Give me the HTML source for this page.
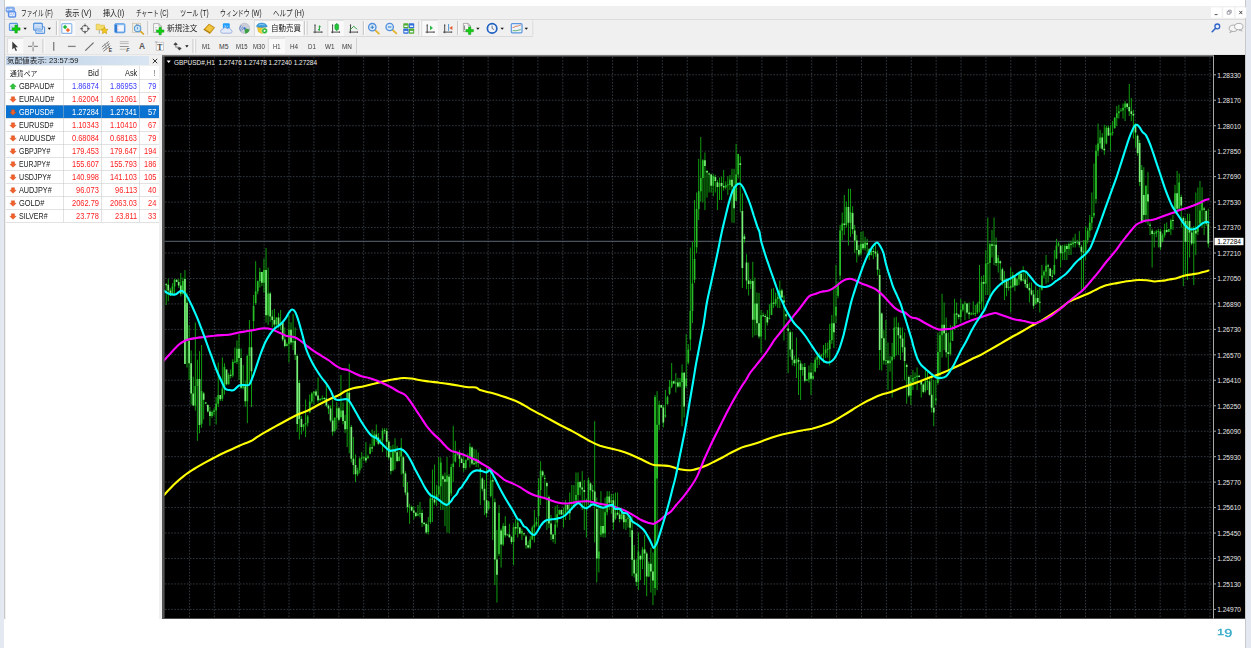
<!DOCTYPE html>
<html><head><meta charset="utf-8"><title>MT4</title>
<style>
html,body{margin:0;padding:0;background:#fff;}
body{width:1251px;height:648px;position:relative;overflow:hidden;font-family:"Liberation Sans","Noto Sans CJK JP",sans-serif;}
.tx{position:absolute;white-space:nowrap;line-height:1;transform-origin:0 0;font-family:"Liberation Sans","Noto Sans CJK JP",sans-serif;}
.abs{position:absolute}
</style></head><body>
<div class="abs" style="left:0;top:0;width:4px;height:648px;background:#e4e8f1"></div>
<div class="abs" style="left:4px;top:0;width:1px;height:619px;background:#c9c9c9"></div>
<div class="abs" style="left:1245px;top:0;width:6px;height:648px;background:#e4e8f1"></div><div class="abs" style="left:1245px;top:0;width:1px;height:648px;background:#c9c9c9"></div>
<div class="abs" style="left:5px;top:6px;width:1240px;height:49px;background:#f0f0f0"></div>
<div class="abs" style="left:5px;top:18.5px;width:1240px;height:1px;background:#dcdcdc"></div>
<div class="abs" style="left:5px;top:36px;width:528px;height:1px;background:#dadada"></div>
<div class="abs" style="left:5px;top:54px;width:1240px;height:1px;background:#e4e4e4"></div>
<div style="position:absolute;left:5px;top:55px;width:157px;height:564px;background:#f0f0f0"></div>
<div style="position:absolute;left:6px;top:66px;width:153px;height:553px;background:#fff"></div>
<div style="position:absolute;left:6px;top:56px;width:143px;height:9px;background:linear-gradient(90deg,#bfd2e6,#d9e5f2)"></div>
<svg style="position:absolute;left:152px;top:57.5px" width="6" height="6" viewBox="0 0 6 6"><path d="M0.8 0.8L5.2 5.2M5.2 0.8L0.8 5.2" stroke="#222" stroke-width="0.9"/></svg>
<div style="position:absolute;left:6px;top:104.9px;width:153px;height:13.2px;background:#0a72d1"></div>
<div style="position:absolute;left:6px;top:78.5px;width:153px;height:1px;background:rgba(190,190,190,0.45)"></div>
<div style="position:absolute;left:6px;top:91.5px;width:153px;height:1px;background:rgba(190,190,190,0.45)"></div>
<div style="position:absolute;left:6px;top:104.6px;width:153px;height:1px;background:rgba(190,190,190,0.45)"></div>
<div style="position:absolute;left:6px;top:117.6px;width:153px;height:1px;background:rgba(190,190,190,0.45)"></div>
<div style="position:absolute;left:6px;top:130.6px;width:153px;height:1px;background:rgba(190,190,190,0.45)"></div>
<div style="position:absolute;left:6px;top:143.6px;width:153px;height:1px;background:rgba(190,190,190,0.45)"></div>
<div style="position:absolute;left:6px;top:156.7px;width:153px;height:1px;background:rgba(190,190,190,0.45)"></div>
<div style="position:absolute;left:6px;top:169.7px;width:153px;height:1px;background:rgba(190,190,190,0.45)"></div>
<div style="position:absolute;left:6px;top:182.7px;width:153px;height:1px;background:rgba(190,190,190,0.45)"></div>
<div style="position:absolute;left:6px;top:195.8px;width:153px;height:1px;background:rgba(190,190,190,0.45)"></div>
<div style="position:absolute;left:6px;top:208.8px;width:153px;height:1px;background:rgba(190,190,190,0.45)"></div>
<div style="position:absolute;left:6px;top:221.8px;width:153px;height:1px;background:rgba(190,190,190,0.45)"></div>
<div style="position:absolute;left:63.3px;top:66px;width:1px;height:156.3px;background:rgba(190,190,190,0.45)"></div>
<div style="position:absolute;left:101.0px;top:66px;width:1px;height:156.3px;background:rgba(190,190,190,0.45)"></div>
<div style="position:absolute;left:138.8px;top:66px;width:1px;height:156.3px;background:rgba(190,190,190,0.45)"></div>
<svg style="position:absolute;left:8.8px;top:82.5px" width="8" height="7" viewBox="0 0 8 7"><path d="M4 0.600L7.200 3.500H5.600V6H2.400V3.500H0.800z" fill="#2fc43a" stroke="#1a9a24" stroke-width="0.4"/></svg>
<svg style="position:absolute;left:8.8px;top:95.5px" width="8" height="7" viewBox="0 0 8 7"><path d="M4 6.200L7.200 3.300H5.600V0.800H2.400V3.300H0.800z" fill="#f2602a" stroke="#cf4414" stroke-width="0.4"/></svg>
<svg style="position:absolute;left:8.8px;top:108.6px" width="8" height="7" viewBox="0 0 8 7"><path d="M4 6.200L7.200 3.300H5.600V0.800H2.400V3.300H0.800z" fill="#f2602a" stroke="#cf4414" stroke-width="0.4"/></svg>
<svg style="position:absolute;left:8.8px;top:121.6px" width="8" height="7" viewBox="0 0 8 7"><path d="M4 6.200L7.200 3.300H5.600V0.800H2.400V3.300H0.800z" fill="#f2602a" stroke="#cf4414" stroke-width="0.4"/></svg>
<svg style="position:absolute;left:8.8px;top:134.6px" width="8" height="7" viewBox="0 0 8 7"><path d="M4 6.200L7.200 3.300H5.600V0.800H2.400V3.300H0.800z" fill="#f2602a" stroke="#cf4414" stroke-width="0.4"/></svg>
<svg style="position:absolute;left:8.8px;top:147.6px" width="8" height="7" viewBox="0 0 8 7"><path d="M4 6.200L7.200 3.300H5.600V0.800H2.400V3.300H0.800z" fill="#f2602a" stroke="#cf4414" stroke-width="0.4"/></svg>
<svg style="position:absolute;left:8.8px;top:160.7px" width="8" height="7" viewBox="0 0 8 7"><path d="M4 6.200L7.200 3.300H5.600V0.800H2.400V3.300H0.800z" fill="#f2602a" stroke="#cf4414" stroke-width="0.4"/></svg>
<svg style="position:absolute;left:8.8px;top:173.7px" width="8" height="7" viewBox="0 0 8 7"><path d="M4 6.200L7.200 3.300H5.600V0.800H2.400V3.300H0.800z" fill="#f2602a" stroke="#cf4414" stroke-width="0.4"/></svg>
<svg style="position:absolute;left:8.8px;top:186.7px" width="8" height="7" viewBox="0 0 8 7"><path d="M4 6.200L7.200 3.300H5.600V0.800H2.400V3.300H0.800z" fill="#f2602a" stroke="#cf4414" stroke-width="0.4"/></svg>
<svg style="position:absolute;left:8.8px;top:199.8px" width="8" height="7" viewBox="0 0 8 7"><path d="M4 6.200L7.200 3.300H5.600V0.800H2.400V3.300H0.800z" fill="#f2602a" stroke="#cf4414" stroke-width="0.4"/></svg>
<svg style="position:absolute;left:8.8px;top:212.8px" width="8" height="7" viewBox="0 0 8 7"><path d="M4 6.200L7.200 3.300H5.600V0.800H2.400V3.300H0.800z" fill="#f2602a" stroke="#cf4414" stroke-width="0.4"/></svg>
<svg width="1251" height="648" viewBox="0 0 1251 648" style="position:absolute;left:0;top:0">
<rect x="162.0" y="55.0" width="1083.0" height="563.7" fill="#000"/>
<path d="M189.46 57.0V618.7M214.35 57.0V618.7M239.24 57.0V618.7M264.13 57.0V618.7M289.02 57.0V618.7M313.91 57.0V618.7M338.80 57.0V618.7M363.69 57.0V618.7M388.58 57.0V618.7M413.47 57.0V618.7M438.36 57.0V618.7M463.25 57.0V618.7M488.14 57.0V618.7M513.03 57.0V618.7M537.92 57.0V618.7M562.81 57.0V618.7M587.70 57.0V618.7M612.59 57.0V618.7M637.48 57.0V618.7M662.37 57.0V618.7M687.26 57.0V618.7M712.15 57.0V618.7M737.04 57.0V618.7M761.93 57.0V618.7M786.82 57.0V618.7M811.71 57.0V618.7M836.60 57.0V618.7M861.49 57.0V618.7M886.38 57.0V618.7M911.27 57.0V618.7M936.16 57.0V618.7M961.05 57.0V618.7M985.94 57.0V618.7M1010.83 57.0V618.7M1035.72 57.0V618.7M1060.61 57.0V618.7M1085.50 57.0V618.7M1110.39 57.0V618.7M1135.28 57.0V618.7M1160.17 57.0V618.7M1185.06 57.0V618.7M1209.95 57.0V618.7M165.0 74.80H1213.5M165.0 100.26H1213.5M165.0 125.71H1213.5M165.0 151.17H1213.5M165.0 176.63H1213.5M165.0 202.08H1213.5M165.0 227.54H1213.5M165.0 253.00H1213.5M165.0 278.46H1213.5M165.0 303.91H1213.5M165.0 329.37H1213.5M165.0 354.83H1213.5M165.0 380.28H1213.5M165.0 405.74H1213.5M165.0 431.20H1213.5M165.0 456.66H1213.5M165.0 482.11H1213.5M165.0 507.57H1213.5M165.0 533.03H1213.5M165.0 558.48H1213.5M165.0 583.94H1213.5M165.0 609.40H1213.5" stroke="#778899" stroke-opacity="0.42" stroke-width="1" stroke-dasharray="1.56 1.56" fill="none"/>
<path d="M164.5 241.3H1213.5" stroke="#5a6672" stroke-width="1"/>
<defs><filter id="cb" x="160" y="50" width="1090" height="575" filterUnits="userSpaceOnUse" color-interpolation-filters="sRGB"><feGaussianBlur stdDeviation="0.7 0.35"/></filter></defs>
<g filter="url(#cb)"><path d="M166.22 283.0V305.0M168.30 278.8V301.2M170.38 287.9V295.9M172.46 283.2V295.2M174.54 278.8V293.8M176.62 279.3V282.1M178.70 279.1V288.0M180.78 273.0V296.4M182.86 277.6V294.7M184.94 270.0V364.0M187.02 292.5V367.5M189.10 325.0V380.0M191.18 350.4V404.5M193.26 376.7V406.1M195.34 322.5V410.6M197.42 359.7V440.8M199.50 351.2V433.2M201.58 345.0V427.7M203.66 392.1V419.5M205.74 401.9V404.1M207.82 404.1V412.5M209.90 407.0V425.8M211.98 410.5V417.9M214.06 408.2V415.6M216.14 397.0V424.5M218.22 362.5V407.0M220.30 395.0V401.0M222.38 357.5V401.0M224.46 363.2V394.7M226.54 369.5V385.3M228.62 372.9V384.6M230.70 369.5V378.4M232.78 359.3V377.4M234.86 347.5V363.2M236.94 340.4V364.0M239.02 333.8V380.0M241.10 348.5V389.2M243.18 365.0V389.4M245.26 380.6V406.8M247.34 354.9V423.2M249.42 320.0V385.0M251.50 329.4V407.0M253.58 295.0V330.0M255.66 261.2V304.8M257.74 280.5V294.2M259.82 267.9V287.5M261.90 271.8V286.2M263.98 258.6V292.7M266.06 248.0V322.6M268.14 267.5V325.0M270.22 291.9V321.8M272.30 310.0V327.5M274.38 308.8V327.5M276.46 317.3V328.5M278.54 312.9V327.9M280.62 310.0V330.0M282.70 322.6V341.4M284.78 327.5V347.5M286.86 342.3V346.4M288.94 315.0V362.5M291.02 322.4V344.8M293.10 313.8V350.0M295.18 327.5V360.0M297.26 354.2V432.0M299.34 380.1V439.5M301.42 416.0V434.5M303.50 424.2V430.8M305.58 399.5V437.0M307.66 415.0V426.5M309.74 394.5V413.2M311.82 392.2V403.7M313.90 391.4V404.5M315.98 389.3V396.5M318.06 377.5V402.5M320.14 398.0V400.7M322.22 395.4V400.4M324.30 397.1V400.7M326.38 382.5V407.0M328.46 404.3V414.1M330.54 405.3V422.2M332.62 399.5V435.8M334.70 417.3V432.5M336.78 402.0V429.5M338.86 406.7V421.6M340.94 375.0V418.4M343.02 402.3V424.3M345.10 414.9V432.9M347.18 390.1V447.0M349.26 363.8V453.2M351.34 425.0V462.5M353.42 437.0V474.5M355.50 454.5V482.0M357.58 467.7V476.2M359.66 457.3V473.3M361.74 452.0V468.2M363.82 455.7V460.9M365.90 442.0V462.8M367.98 454.6V459.0M370.06 443.8V454.3M372.14 429.5V452.0M374.22 431.0V446.4M376.30 424.5V442.0M378.38 433.0V445.1M380.46 438.7V444.4M382.54 428.2V452.0M384.62 428.2V433.8M386.70 428.2V457.0M388.78 440.1V459.7M390.86 445.8V474.5M392.94 444.7V471.2M395.02 438.2V469.5M397.10 445.9V462.2M399.18 450.7V461.2M401.26 438.2V474.5M403.34 455.8V487.0M405.42 471.2V495.1M407.50 482.0V512.5M409.58 503.6V523.8M411.66 505.5V511.3M413.74 506.2V519.5M415.82 512.2V517.3M417.90 505.0V516.2M419.98 502.0V517.5M422.06 509.5V527.0M424.14 522.1V525.7M426.22 522.5V533.8M428.30 517.0V534.5M430.38 493.3V523.9M432.46 469.5V522.0M434.54 464.5V504.8M436.62 485.1V506.2M438.70 457.0V497.0M440.78 457.5V510.0M442.86 474.5V510.0M444.94 472.5V526.2M447.02 457.0V532.5M449.10 474.2V533.2M451.18 463.9V496.0M453.26 425.8V482.0M455.34 440.8V462.5M457.42 451.9V455.7M459.50 450.0V467.0M461.58 457.3V463.1M463.66 452.5V472.0M465.74 459.3V469.9M467.82 453.3V460.6M469.90 443.2V467.5M471.98 446.5V465.2M474.06 448.8V465.0M476.14 449.5V467.0M478.22 452.5V467.5M480.30 467.6V505.0M482.38 477.2V491.3M484.46 480.0V515.0M486.54 467.5V517.5M488.62 501.0V510.4M490.70 470.0V497.5M492.78 476.1V540.0M494.86 498.5V585.0M496.94 530.0V602.5M499.02 505.0V556.3M501.10 528.5V567.5M503.18 523.2V545.9M505.26 516.2V537.5M507.34 533.8V535.9M509.42 523.8V537.7M511.50 536.1V544.2M513.58 523.2V565.0M515.66 518.8V534.6M517.74 520.0V537.5M519.82 527.0V534.2M521.90 528.8V540.0M523.98 532.8V536.1M526.06 535.0V548.8M528.14 541.2V548.5M530.22 536.2V548.8M532.30 525.8V539.7M534.38 510.0V542.5M536.46 517.3V526.5M538.54 478.3V527.5M540.62 461.2V505.0M542.70 470.2V477.3M544.78 475.0V497.5M546.86 481.7V530.0M548.94 495.5V528.0M551.02 515.0V540.0M553.10 534.2V542.3M555.18 506.2V543.8M557.26 505.0V527.5M559.34 509.5V515.1M561.42 509.3V515.1M563.50 507.5V527.5M565.58 500.0V520.0M567.66 503.1V512.7M569.74 492.5V520.0M571.82 485.0V510.0M573.90 485.0V507.5M575.98 472.5V501.8M578.06 472.5V502.5M580.14 481.1V495.4M582.22 471.2V510.0M584.30 480.0V530.0M586.38 498.6V537.5M588.46 477.5V505.0M590.54 482.3V507.5M592.62 485.0V500.0M594.70 421.2V542.5M596.78 497.5V582.5M598.86 502.5V572.5M600.94 491.2V537.0M603.02 506.2V537.5M605.10 497.5V537.5M607.18 491.2V515.3M609.26 491.2V510.0M611.34 493.8V513.8M613.42 493.8V530.0M615.50 492.5V519.9M617.58 492.5V515.6M619.66 507.5V522.5M621.74 511.3V520.3M623.82 513.8V528.8M625.90 515.0V530.0M627.98 512.5V527.5M630.06 516.7V537.0M632.14 516.2V576.2M634.22 545.0V577.5M636.30 559.3V586.0M638.38 532.5V590.0M640.46 554.6V580.0M642.54 547.1V569.0M644.62 535.0V585.0M646.70 551.8V596.2M648.78 561.5V577.1M650.86 547.5V592.5M652.94 552.5V605.0M655.02 395.0V595.4M657.10 391.2V590.0M659.18 400.6V430.0M661.26 404.8V408.0M663.34 405.0V427.5M665.42 390.0V417.8M667.50 395.6V404.7M669.58 380.0V395.0M671.66 363.0V388.2M673.74 380.7V384.3M675.82 373.0V392.5M677.90 377.9V387.7M679.98 378.0V387.5M682.06 364.4V426.2M684.14 372.1V417.5M686.22 334.2V388.0M688.30 344.1V364.5M690.38 247.5V350.5M692.46 241.8V323.0M694.54 200.0V283.0M696.62 192.5V253.0M698.70 158.8V220.0M700.78 137.0V201.7M702.86 159.2V202.5M704.94 152.5V210.0M707.02 169.9V197.5M709.10 172.5V192.5M711.18 173.7V192.5M713.26 173.8V196.2M715.34 175.0V192.5M717.42 180.0V210.0M719.50 177.5V200.0M721.58 176.6V200.0M723.66 170.0V190.6M725.74 181.4V189.4M727.82 176.2V195.0M729.90 175.0V190.0M731.98 168.8V222.5M734.06 168.8V223.0M736.14 143.8V200.9M738.22 153.9V178.4M740.30 156.2V212.5M742.38 193.4V288.0M744.46 234.1V242.6M746.54 254.2V289.2M748.62 262.5V295.5M750.70 279.2V288.9M752.78 261.8V337.5M754.86 277.5V335.5M756.94 292.5V335.2M759.02 293.0V338.6M761.10 310.0V353.0M763.18 312.6V316.6M765.26 314.2V340.0M767.34 310.0V325.5M769.42 304.2V319.5M771.50 288.8V315.2M773.58 288.0V308.0M775.66 292.5V306.2M777.74 291.8V308.0M779.82 280.5V308.0M781.90 288.8V298.1M783.98 295.5V340.5M786.06 313.4V319.5M788.14 323.0V373.0M790.22 330.4V356.9M792.30 331.8V365.5M794.38 355.7V366.3M796.46 337.5V378.0M798.54 357.5V395.0M800.62 360.5V400.0M802.70 363.9V375.7M804.78 363.0V382.5M806.86 378.9V380.9M808.94 365.5V382.5M811.02 362.5V395.0M813.10 363.0V379.9M815.18 357.5V372.3M817.26 353.0V368.0M819.34 352.5V365.0M821.42 354.3V356.6M823.50 345.0V363.0M825.58 343.0V358.0M827.66 342.5V357.5M829.74 323.8V365.5M831.82 315.0V343.9M833.90 287.5V348.0M835.98 265.0V323.0M838.06 281.4V298.2M840.14 225.0V280.5M842.22 212.5V240.5M844.30 195.0V235.0M846.38 201.5V227.7M848.46 188.8V245.5M850.54 188.8V236.8M852.62 206.2V234.0M854.70 225.0V253.0M856.78 235.0V262.5M858.86 244.9V256.5M860.94 231.8V255.5M863.02 231.2V250.0M865.10 236.8V250.5M867.18 238.8V257.5M869.26 248.0V260.0M871.34 249.5V255.6M873.42 248.0V259.2M875.50 243.0V256.8M877.58 250.5V275.5M879.66 268.9V370.0M881.74 312.6V370.5M883.82 330.1V364.5M885.90 320.0V365.0M887.98 342.5V390.0M890.06 356.0V371.6M892.14 343.0V397.5M894.22 317.5V359.3M896.30 316.8V355.5M898.38 322.5V355.0M900.46 327.5V360.0M902.54 327.5V352.5M904.62 332.5V380.0M906.70 363.4V403.8M908.78 375.6V397.3M910.86 375.0V405.0M912.94 370.0V390.0M915.02 372.5V385.0M917.10 367.5V390.0M919.18 374.8V377.4M921.26 379.6V397.5M923.34 383.3V393.4M925.42 370.0V392.5M927.50 370.0V390.0M929.58 377.5V395.7M931.66 375.0V412.5M933.74 380.0V426.2M935.82 380.0V405.0M937.90 332.5V384.7M939.98 331.3V377.5M942.06 293.8V357.5M944.14 302.5V350.0M946.22 317.5V357.5M948.30 332.5V370.0M950.38 325.0V355.5M952.46 325.8V341.0M954.54 298.8V330.0M956.62 302.5V323.8M958.70 313.8V319.3M960.78 298.8V322.5M962.86 303.5V311.5M964.94 301.2V320.0M967.02 303.0V313.9M969.10 302.5V318.8M971.18 312.1V315.2M973.26 301.2V315.0M975.34 305.0V316.2M977.42 302.4V313.9M979.50 265.0V312.5M981.58 276.2V309.6M983.66 275.0V312.5M985.74 250.0V295.0M987.82 217.5V295.0M989.90 242.8V300.0M991.98 230.0V257.5M994.06 217.5V265.0M996.14 237.5V266.0M998.22 255.0V272.5M1000.30 260.5V280.0M1002.38 267.5V285.4M1004.46 271.2V300.0M1006.54 278.2V296.2M1008.62 280.0V290.7M1010.70 267.5V312.5M1012.78 271.9V287.9M1014.86 276.2V291.2M1016.94 277.7V285.8M1019.02 271.2V285.0M1021.10 273.3V281.9M1023.18 266.2V281.4M1025.26 271.2V287.5M1027.34 275.0V288.8M1029.42 282.5V302.5M1031.50 282.5V295.6M1033.58 290.0V308.8M1035.66 286.2V304.6M1037.74 290.0V303.5M1039.82 287.5V312.5M1041.90 265.0V290.6M1043.98 270.0V278.3M1046.06 255.0V283.8M1048.14 263.8V282.5M1050.22 268.3V276.3M1052.30 270.0V280.0M1054.38 250.0V275.2M1056.46 238.8V259.3M1058.54 241.7V246.6M1060.62 245.0V267.5M1062.70 245.0V260.0M1064.78 244.4V260.0M1066.86 243.8V260.0M1068.94 242.5V255.0M1071.02 240.8V255.0M1073.10 237.5V247.5M1075.18 233.8V247.5M1077.26 239.8V244.4M1079.34 231.2V247.5M1081.42 245.0V290.0M1083.50 240.0V290.0M1085.58 226.2V260.0M1087.66 227.8V243.5M1089.74 215.0V237.5M1091.82 192.5V230.0M1093.90 163.5V218.0M1095.98 144.8V203.5M1098.06 123.5V156.0M1100.14 129.8V148.5M1102.22 133.1V150.0M1104.30 124.8V154.8M1106.38 125.7V144.3M1108.46 125.5V135.9M1110.54 124.8V151.2M1112.62 121.0V135.6M1114.70 117.0V128.8M1116.78 106.0V126.0M1118.86 104.8V118.5M1120.94 108.1V111.4M1123.02 103.5V118.5M1125.10 101.0V121.0M1127.18 103.4V109.3M1129.26 84.0V116.0M1131.34 98.0V121.0M1133.42 109.8V138.5M1135.50 123.1V147.5M1137.58 134.4V155.6M1139.66 139.8V186.0M1141.74 165.0V222.5M1143.82 167.2V220.0M1145.90 185.5V223.0M1147.98 172.2V225.0M1150.06 222.5V235.0M1152.14 228.8V267.5M1154.22 231.2V247.5M1156.30 229.9V237.2M1158.38 228.8V247.5M1160.46 228.8V250.0M1162.54 233.4V242.4M1164.62 223.8V237.5M1166.70 222.5V232.8M1168.78 228.9V232.2M1170.86 218.8V235.0M1172.94 215.0V230.0M1175.02 185.0V214.1M1177.10 171.0V212.5M1179.18 173.5V210.5M1181.26 194.7V227.5M1183.34 216.3V286.2M1185.42 218.2V275.0M1187.50 213.8V280.0M1189.58 213.8V257.5M1191.66 227.0V245.4M1193.74 226.0V285.0M1195.82 192.5V255.0M1197.90 187.5V235.0M1199.98 181.0V225.5M1202.06 187.2V227.5M1204.14 207.0V235.0M1206.22 210.2V226.0M1208.30 208.8V247.5" stroke="#0f9c0f" stroke-width="1" fill="none"/><path d="M171.61 286.5h1.7V295.2h-1.7zM173.69 279.8h1.7V286.5h-1.7zM182.01 280.9h1.7V293.7h-1.7zM194.49 386.0h1.7V405.6h-1.7zM196.57 379.1h1.7V386.0h-1.7zM200.73 391.1h1.7V423.7h-1.7zM211.13 412.1h1.7V416.1h-1.7zM213.21 410.6h1.7V412.1h-1.7zM215.29 403.8h1.7V410.6h-1.7zM217.37 395.1h1.7V403.8h-1.7zM221.53 388.5h1.7V398.8h-1.7zM223.61 366.7h1.7V388.5h-1.7zM227.77 374.9h1.7V384.2h-1.7zM231.93 362.1h1.7V375.6h-1.7zM234.01 361.6h1.7V362.6h-1.7zM236.09 348.8h1.7V362.1h-1.7zM242.33 386.3h1.7V387.8h-1.7zM246.49 355.9h1.7V401.2h-1.7zM248.57 347.3h1.7V355.9h-1.7zM252.73 305.9h1.7V321.0h-1.7zM254.81 291.3h1.7V303.0h-1.7zM256.89 281.3h1.7V291.3h-1.7zM258.97 272.1h1.7V281.3h-1.7zM263.13 270.0h1.7V282.8h-1.7zM267.29 293.4h1.7V315.2h-1.7zM275.61 317.4h1.7V324.5h-1.7zM279.77 323.0h1.7V325.2h-1.7zM286.01 344.1h1.7V345.9h-1.7zM288.09 329.7h1.7V344.1h-1.7zM292.25 340.9h1.7V342.4h-1.7zM302.65 424.6h1.7V427.1h-1.7zM304.73 422.9h1.7V424.6h-1.7zM306.81 416.4h1.7V422.9h-1.7zM308.89 401.4h1.7V412.3h-1.7zM310.97 393.4h1.7V401.4h-1.7zM313.05 391.6h1.7V393.4h-1.7zM319.29 399.1h1.7V400.2h-1.7zM321.37 398.2h1.7V399.2h-1.7zM333.85 417.8h1.7V430.9h-1.7zM335.93 408.3h1.7V417.8h-1.7zM340.09 410.4h1.7V417.0h-1.7zM346.33 392.7h1.7V429.2h-1.7zM356.73 470.2h1.7V474.3h-1.7zM358.81 458.4h1.7V470.2h-1.7zM360.89 457.6h1.7V458.6h-1.7zM362.97 457.3h1.7V458.3h-1.7zM367.13 456.2h1.7V458.0h-1.7zM369.21 447.2h1.7V453.8h-1.7zM373.37 434.6h1.7V445.6h-1.7zM379.61 439.7h1.7V443.8h-1.7zM381.69 430.7h1.7V439.7h-1.7zM392.09 451.3h1.7V470.3h-1.7zM398.33 456.4h1.7V460.9h-1.7zM400.41 447.4h1.7V456.4h-1.7zM408.73 506.5h1.7V507.5h-1.7zM417.05 514.3h1.7V515.6h-1.7zM419.13 512.9h1.7V514.3h-1.7zM427.45 524.4h1.7V531.9h-1.7zM429.53 498.6h1.7V522.1h-1.7zM435.77 494.6h1.7V498.5h-1.7zM437.85 486.2h1.7V494.6h-1.7zM439.93 462.4h1.7V486.2h-1.7zM446.17 475.5h1.7V481.8h-1.7zM450.33 467.0h1.7V493.5h-1.7zM452.41 463.5h1.7V467.0h-1.7zM454.49 454.2h1.7V461.4h-1.7zM456.57 453.7h1.7V454.7h-1.7zM464.89 460.0h1.7V467.9h-1.7zM466.97 456.5h1.7V460.0h-1.7zM469.05 446.8h1.7V456.5h-1.7zM475.29 460.3h1.7V463.8h-1.7zM487.77 501.5h1.7V508.8h-1.7zM489.85 480.2h1.7V496.0h-1.7zM498.17 513.1h1.7V553.9h-1.7zM502.33 526.1h1.7V544.5h-1.7zM506.49 534.3h1.7V535.3h-1.7zM512.73 527.0h1.7V541.9h-1.7zM516.89 522.4h1.7V528.6h-1.7zM521.05 530.9h1.7V533.6h-1.7zM529.37 539.5h1.7V547.5h-1.7zM531.45 527.5h1.7V539.5h-1.7zM533.53 524.6h1.7V527.5h-1.7zM535.61 521.9h1.7V524.6h-1.7zM537.69 490.0h1.7V516.0h-1.7zM539.77 470.8h1.7V490.0h-1.7zM554.33 524.6h1.7V534.7h-1.7zM556.41 514.3h1.7V522.5h-1.7zM558.49 509.9h1.7V514.3h-1.7zM562.65 513.3h1.7V514.4h-1.7zM564.73 505.1h1.7V513.3h-1.7zM570.97 507.3h1.7V508.4h-1.7zM573.05 504.9h1.7V506.0h-1.7zM575.13 494.9h1.7V500.6h-1.7zM577.21 481.9h1.7V494.9h-1.7zM587.61 480.1h1.7V500.4h-1.7zM598.01 551.4h1.7V558.6h-1.7zM600.09 526.0h1.7V534.8h-1.7zM604.25 512.2h1.7V533.6h-1.7zM606.33 496.4h1.7V512.2h-1.7zM610.49 500.2h1.7V502.8h-1.7zM614.65 512.7h1.7V518.6h-1.7zM620.89 512.6h1.7V519.1h-1.7zM625.05 519.0h1.7V522.3h-1.7zM627.13 517.6h1.7V519.0h-1.7zM637.53 551.4h1.7V581.8h-1.7zM641.69 549.5h1.7V559.4h-1.7zM647.93 563.7h1.7V576.4h-1.7zM654.17 397.0h1.7V588.0h-1.7zM656.25 424.7h1.7V478.4h-1.7zM658.33 404.7h1.7V424.7h-1.7zM664.57 415.3h1.7V416.5h-1.7zM666.65 397.0h1.7V404.0h-1.7zM668.73 386.7h1.7V393.7h-1.7zM670.81 381.3h1.7V386.7h-1.7zM674.97 382.6h1.7V383.6h-1.7zM679.13 381.9h1.7V386.5h-1.7zM681.21 372.8h1.7V381.9h-1.7zM685.37 378.5h1.7V386.0h-1.7zM687.45 349.5h1.7V362.5h-1.7zM689.53 311.1h1.7V339.4h-1.7zM691.61 283.6h1.7V311.1h-1.7zM693.69 259.0h1.7V279.7h-1.7zM695.77 208.9h1.7V247.2h-1.7zM697.85 191.3h1.7V208.9h-1.7zM699.93 178.1h1.7V191.3h-1.7zM702.01 160.3h1.7V178.1h-1.7zM712.41 175.9h1.7V185.8h-1.7zM718.65 182.9h1.7V186.9h-1.7zM724.89 185.2h1.7V187.4h-1.7zM726.97 184.6h1.7V185.6h-1.7zM729.05 179.7h1.7V185.1h-1.7zM735.29 174.6h1.7V200.8h-1.7zM737.37 154.0h1.7V174.6h-1.7zM749.85 281.1h1.7V284.0h-1.7zM754.01 303.5h1.7V319.8h-1.7zM760.25 315.3h1.7V336.5h-1.7zM768.57 318.0h1.7V319.0h-1.7zM770.65 302.8h1.7V314.9h-1.7zM774.81 299.1h1.7V303.7h-1.7zM776.89 297.1h1.7V299.1h-1.7zM778.97 290.4h1.7V297.1h-1.7zM795.61 359.1h1.7V363.2h-1.7zM801.85 366.9h1.7V370.1h-1.7zM806.01 379.6h1.7V380.8h-1.7zM808.09 372.4h1.7V379.6h-1.7zM812.25 376.0h1.7V378.8h-1.7zM814.33 359.7h1.7V371.6h-1.7zM816.41 356.4h1.7V359.7h-1.7zM820.57 354.8h1.7V356.5h-1.7zM822.65 353.2h1.7V354.8h-1.7zM824.73 349.6h1.7V353.2h-1.7zM826.81 348.7h1.7V349.7h-1.7zM828.89 340.1h1.7V348.9h-1.7zM830.97 323.2h1.7V340.1h-1.7zM835.13 306.7h1.7V315.8h-1.7zM837.21 284.5h1.7V295.7h-1.7zM839.29 230.5h1.7V275.4h-1.7zM841.37 223.6h1.7V230.5h-1.7zM845.53 206.9h1.7V224.9h-1.7zM849.69 212.2h1.7V222.8h-1.7zM860.09 243.7h1.7V253.6h-1.7zM864.25 242.4h1.7V248.3h-1.7zM870.49 251.0h1.7V254.9h-1.7zM885.05 359.9h1.7V360.9h-1.7zM889.21 360.6h1.7V363.3h-1.7zM891.29 356.7h1.7V360.6h-1.7zM893.37 327.8h1.7V356.7h-1.7zM895.45 327.2h1.7V328.2h-1.7zM910.01 381.7h1.7V395.4h-1.7zM912.09 378.1h1.7V381.7h-1.7zM914.17 377.0h1.7V378.1h-1.7zM916.25 375.8h1.7V377.0h-1.7zM924.57 381.6h1.7V390.4h-1.7zM926.65 381.0h1.7V382.0h-1.7zM934.97 398.4h1.7V400.2h-1.7zM937.05 352.0h1.7V382.8h-1.7zM939.13 335.2h1.7V352.0h-1.7zM941.21 324.7h1.7V335.2h-1.7zM949.53 342.5h1.7V354.0h-1.7zM951.61 330.5h1.7V340.8h-1.7zM953.69 313.5h1.7V325.9h-1.7zM959.93 309.7h1.7V316.9h-1.7zM962.01 304.3h1.7V309.7h-1.7zM964.09 303.4h1.7V304.3h-1.7zM970.33 313.6h1.7V314.6h-1.7zM972.41 313.2h1.7V314.2h-1.7zM974.49 313.1h1.7V314.1h-1.7zM976.57 304.0h1.7V312.6h-1.7zM978.65 301.4h1.7V304.0h-1.7zM980.73 282.0h1.7V301.4h-1.7zM984.89 263.6h1.7V283.8h-1.7zM986.97 262.7h1.7V263.7h-1.7zM989.05 244.3h1.7V262.9h-1.7zM993.21 244.8h1.7V245.7h-1.7zM997.37 257.7h1.7V263.0h-1.7zM1003.61 279.4h1.7V281.3h-1.7zM1007.77 286.9h1.7V288.1h-1.7zM1011.93 275.0h1.7V287.1h-1.7zM1016.09 279.3h1.7V285.6h-1.7zM1018.17 273.8h1.7V279.3h-1.7zM1022.33 279.5h1.7V280.5h-1.7zM1034.81 298.1h1.7V303.7h-1.7zM1041.05 275.6h1.7V289.5h-1.7zM1043.13 271.8h1.7V275.6h-1.7zM1045.21 265.7h1.7V271.8h-1.7zM1053.53 265.0h1.7V273.9h-1.7zM1055.61 245.4h1.7V258.4h-1.7zM1057.69 243.3h1.7V245.4h-1.7zM1061.85 252.2h1.7V253.3h-1.7zM1063.93 246.0h1.7V252.2h-1.7zM1068.09 244.1h1.7V249.0h-1.7zM1072.25 242.2h1.7V244.3h-1.7zM1076.41 241.7h1.7V242.5h-1.7zM1084.73 240.2h1.7V252.4h-1.7zM1086.81 230.7h1.7V240.2h-1.7zM1088.89 222.7h1.7V230.7h-1.7zM1090.97 217.1h1.7V222.7h-1.7zM1093.05 213.0h1.7V215.5h-1.7zM1095.13 150.8h1.7V199.1h-1.7zM1097.21 143.5h1.7V150.8h-1.7zM1099.29 137.5h1.7V143.5h-1.7zM1105.53 127.8h1.7V143.4h-1.7zM1109.69 133.1h1.7V135.4h-1.7zM1111.77 132.3h1.7V133.1h-1.7zM1113.85 118.0h1.7V128.0h-1.7zM1115.93 113.3h1.7V118.0h-1.7zM1118.01 111.3h1.7V113.3h-1.7zM1120.09 110.5h1.7V111.3h-1.7zM1122.17 107.8h1.7V110.5h-1.7zM1124.25 103.6h1.7V107.8h-1.7zM1145.05 185.7h1.7V214.9h-1.7zM1153.37 233.3h1.7V234.3h-1.7zM1155.45 231.6h1.7V233.6h-1.7zM1157.53 231.0h1.7V232.0h-1.7zM1161.69 235.3h1.7V241.5h-1.7zM1163.77 229.9h1.7V235.3h-1.7zM1167.93 229.0h1.7V232.0h-1.7zM1170.01 220.3h1.7V229.0h-1.7zM1174.17 193.3h1.7V212.8h-1.7zM1178.33 182.6h1.7V208.6h-1.7zM1186.65 221.1h1.7V241.7h-1.7zM1192.89 230.4h1.7V243.4h-1.7zM1197.05 228.2h1.7V231.8h-1.7zM1199.13 210.6h1.7V223.4h-1.7zM1201.21 199.9h1.7V210.6h-1.7z" fill="#27bd27"/><path d="M165.37 284.3h1.7V285.3h-1.7zM167.45 284.8h1.7V290.5h-1.7zM169.53 290.5h1.7V295.4h-1.7zM175.77 279.8h1.7V282.1h-1.7zM177.85 282.1h1.7V285.4h-1.7zM179.93 285.4h1.7V293.7h-1.7zM184.09 279.0h1.7V364.0h-1.7zM186.17 302.8h1.7V340.8h-1.7zM188.25 340.8h1.7V363.2h-1.7zM190.33 363.2h1.7V393.6h-1.7zM192.41 393.6h1.7V405.6h-1.7zM198.65 379.1h1.7V425.1h-1.7zM202.81 393.5h1.7V399.7h-1.7zM204.89 402.6h1.7V403.6h-1.7zM206.97 405.0h1.7V411.6h-1.7zM209.05 411.6h1.7V416.1h-1.7zM219.45 395.1h1.7V399.3h-1.7zM225.69 369.5h1.7V384.2h-1.7zM229.85 374.8h1.7V375.8h-1.7zM238.17 348.8h1.7V357.9h-1.7zM240.25 357.9h1.7V387.8h-1.7zM244.41 386.3h1.7V401.2h-1.7zM250.65 347.3h1.7V371.3h-1.7zM261.05 272.1h1.7V282.8h-1.7zM265.21 270.0h1.7V315.2h-1.7zM269.37 293.6h1.7V316.5h-1.7zM271.45 316.5h1.7V319.9h-1.7zM273.53 319.9h1.7V324.5h-1.7zM277.69 317.4h1.7V325.2h-1.7zM281.85 323.0h1.7V339.4h-1.7zM283.93 339.4h1.7V345.9h-1.7zM290.17 329.7h1.7V342.4h-1.7zM294.33 340.9h1.7V354.8h-1.7zM296.41 356.0h1.7V424.0h-1.7zM298.49 383.0h1.7V418.9h-1.7zM300.57 418.9h1.7V427.1h-1.7zM315.13 391.6h1.7V395.4h-1.7zM317.21 395.4h1.7V400.2h-1.7zM323.45 397.9h1.7V398.9h-1.7zM325.53 398.5h1.7V405.6h-1.7zM327.61 405.6h1.7V408.5h-1.7zM329.69 408.5h1.7V420.4h-1.7zM331.77 420.4h1.7V431.6h-1.7zM338.01 408.3h1.7V419.7h-1.7zM342.17 410.4h1.7V420.9h-1.7zM344.25 420.9h1.7V429.2h-1.7zM348.41 392.7h1.7V400.3h-1.7zM350.49 426.9h1.7V458.8h-1.7zM352.57 458.8h1.7V465.0h-1.7zM354.65 465.0h1.7V474.3h-1.7zM365.05 457.8h1.7V460.5h-1.7zM371.29 447.2h1.7V448.5h-1.7zM375.45 434.6h1.7V437.4h-1.7zM377.53 437.4h1.7V443.8h-1.7zM383.77 430.3h1.7V431.3h-1.7zM385.85 430.9h1.7V441.7h-1.7zM387.93 441.7h1.7V457.5h-1.7zM390.01 457.5h1.7V471.0h-1.7zM394.17 451.3h1.7V452.2h-1.7zM396.25 452.2h1.7V460.9h-1.7zM402.49 457.2h1.7V473.6h-1.7zM404.57 473.6h1.7V492.4h-1.7zM406.65 492.4h1.7V507.1h-1.7zM410.81 506.9h1.7V510.5h-1.7zM412.89 510.5h1.7V512.7h-1.7zM414.97 512.7h1.7V516.1h-1.7zM421.21 512.9h1.7V522.7h-1.7zM423.29 522.7h1.7V523.9h-1.7zM425.37 523.9h1.7V532.6h-1.7zM431.61 498.6h1.7V499.6h-1.7zM433.69 499.6h1.7V502.5h-1.7zM442.01 476.2h1.7V479.3h-1.7zM444.09 479.3h1.7V481.8h-1.7zM448.25 476.7h1.7V504.3h-1.7zM458.65 454.1h1.7V458.7h-1.7zM460.73 458.7h1.7V462.9h-1.7zM462.81 462.9h1.7V467.9h-1.7zM471.13 447.5h1.7V463.6h-1.7zM473.21 463.2h1.7V464.2h-1.7zM477.37 460.3h1.7V463.0h-1.7zM479.45 468.7h1.7V470.0h-1.7zM481.53 478.4h1.7V488.8h-1.7zM483.61 488.8h1.7V500.2h-1.7zM485.69 500.2h1.7V513.3h-1.7zM491.93 480.2h1.7V481.5h-1.7zM494.01 502.3h1.7V559.5h-1.7zM496.09 559.5h1.7V574.7h-1.7zM500.25 530.4h1.7V544.5h-1.7zM504.41 526.1h1.7V535.3h-1.7zM508.57 534.5h1.7V537.3h-1.7zM510.65 537.3h1.7V541.9h-1.7zM514.81 527.0h1.7V528.6h-1.7zM518.97 527.6h1.7V533.6h-1.7zM523.13 533.2h1.7V534.2h-1.7zM525.21 536.6h1.7V545.3h-1.7zM527.29 545.3h1.7V547.5h-1.7zM541.85 471.6h1.7V475.2h-1.7zM543.93 477.9h1.7V478.7h-1.7zM546.01 483.0h1.7V486.2h-1.7zM548.09 497.3h1.7V523.6h-1.7zM550.17 523.6h1.7V534.6h-1.7zM552.25 534.6h1.7V539.1h-1.7zM560.57 509.9h1.7V514.4h-1.7zM566.81 505.1h1.7V509.4h-1.7zM568.89 509.4h1.7V513.2h-1.7zM579.29 481.9h1.7V487.4h-1.7zM581.37 487.4h1.7V489.6h-1.7zM583.45 489.9h1.7V492.0h-1.7zM585.53 500.5h1.7V502.3h-1.7zM589.69 483.4h1.7V490.2h-1.7zM591.77 490.2h1.7V491.4h-1.7zM593.85 491.4h1.7V502.1h-1.7zM595.93 509.1h1.7V558.6h-1.7zM602.17 526.0h1.7V533.6h-1.7zM608.41 496.4h1.7V502.8h-1.7zM612.57 500.2h1.7V522.2h-1.7zM616.73 512.7h1.7V514.5h-1.7zM618.81 514.5h1.7V519.1h-1.7zM622.97 514.5h1.7V522.3h-1.7zM629.21 518.9h1.7V527.8h-1.7zM631.29 530.2h1.7V559.8h-1.7zM633.37 559.8h1.7V573.6h-1.7zM635.45 573.6h1.7V581.8h-1.7zM639.61 556.0h1.7V559.4h-1.7zM643.77 549.5h1.7V553.5h-1.7zM645.85 553.5h1.7V576.4h-1.7zM650.01 563.7h1.7V571.4h-1.7zM652.09 571.4h1.7V580.5h-1.7zM660.41 405.0h1.7V407.4h-1.7zM662.49 407.4h1.7V422.4h-1.7zM672.89 381.3h1.7V383.6h-1.7zM677.05 382.6h1.7V386.5h-1.7zM683.29 372.8h1.7V406.6h-1.7zM704.09 160.3h1.7V165.9h-1.7zM706.17 171.1h1.7V172.5h-1.7zM708.25 173.6h1.7V174.6h-1.7zM710.33 174.6h1.7V185.8h-1.7zM714.49 176.9h1.7V181.1h-1.7zM716.57 182.3h1.7V186.9h-1.7zM720.73 182.9h1.7V186.1h-1.7zM722.81 186.1h1.7V187.4h-1.7zM731.13 179.7h1.7V186.6h-1.7zM733.21 186.6h1.7V208.3h-1.7zM739.45 163.3h1.7V164.9h-1.7zM741.53 211.0h1.7V268.0h-1.7zM743.61 236.5h1.7V239.0h-1.7zM745.69 262.6h1.7V280.5h-1.7zM747.77 280.5h1.7V284.0h-1.7zM751.93 281.1h1.7V319.8h-1.7zM756.09 303.5h1.7V323.3h-1.7zM758.17 323.3h1.7V336.5h-1.7zM762.33 315.2h1.7V316.2h-1.7zM764.41 316.0h1.7V317.0h-1.7zM766.49 317.0h1.7V322.6h-1.7zM772.73 302.8h1.7V303.7h-1.7zM781.05 290.4h1.7V297.6h-1.7zM783.13 300.5h1.7V302.4h-1.7zM785.21 314.2h1.7V316.2h-1.7zM787.29 328.6h1.7V330.7h-1.7zM789.37 332.3h1.7V349.6h-1.7zM791.45 349.6h1.7V359.8h-1.7zM793.53 359.8h1.7V363.2h-1.7zM797.69 359.9h1.7V361.7h-1.7zM799.77 363.4h1.7V370.1h-1.7zM803.93 366.9h1.7V380.8h-1.7zM810.17 372.4h1.7V378.8h-1.7zM818.49 356.0h1.7V357.0h-1.7zM833.05 323.2h1.7V332.2h-1.7zM843.45 223.6h1.7V224.9h-1.7zM847.61 206.9h1.7V222.8h-1.7zM851.77 213.1h1.7V229.2h-1.7zM853.85 230.4h1.7V240.5h-1.7zM855.93 240.5h1.7V249.9h-1.7zM858.01 249.9h1.7V254.4h-1.7zM862.17 243.7h1.7V248.3h-1.7zM866.33 243.0h1.7V244.7h-1.7zM868.41 249.3h1.7V254.9h-1.7zM872.57 250.9h1.7V251.9h-1.7zM874.65 251.8h1.7V253.6h-1.7zM876.73 253.6h1.7V269.7h-1.7zM878.81 275.0h1.7V350.0h-1.7zM880.89 313.5h1.7V338.3h-1.7zM882.97 338.3h1.7V360.5h-1.7zM887.13 360.4h1.7V363.3h-1.7zM897.53 327.6h1.7V335.2h-1.7zM899.61 335.2h1.7V338.4h-1.7zM901.69 338.4h1.7V347.2h-1.7zM903.77 347.2h1.7V361.0h-1.7zM905.85 365.1h1.7V366.9h-1.7zM907.93 377.0h1.7V395.4h-1.7zM918.33 375.8h1.7V376.9h-1.7zM920.41 380.4h1.7V384.6h-1.7zM922.49 384.6h1.7V391.9h-1.7zM928.73 381.4h1.7V394.8h-1.7zM930.81 394.8h1.7V407.7h-1.7zM932.89 407.7h1.7V412.4h-1.7zM943.29 324.7h1.7V333.3h-1.7zM945.37 333.3h1.7V352.3h-1.7zM947.45 352.3h1.7V354.0h-1.7zM955.77 313.5h1.7V314.8h-1.7zM957.85 314.8h1.7V316.9h-1.7zM966.17 303.4h1.7V312.5h-1.7zM968.25 312.5h1.7V314.3h-1.7zM982.81 282.0h1.7V283.8h-1.7zM991.13 244.3h1.7V245.7h-1.7zM995.29 244.8h1.7V263.0h-1.7zM999.45 261.3h1.7V263.3h-1.7zM1001.53 269.2h1.7V281.3h-1.7zM1005.69 279.4h1.7V288.1h-1.7zM1009.85 286.5h1.7V287.5h-1.7zM1014.01 277.2h1.7V285.6h-1.7zM1020.25 273.8h1.7V280.5h-1.7zM1024.41 279.5h1.7V284.1h-1.7zM1026.49 284.1h1.7V288.1h-1.7zM1028.57 288.1h1.7V290.3h-1.7zM1030.65 290.3h1.7V294.5h-1.7zM1032.73 294.5h1.7V305.7h-1.7zM1036.89 298.1h1.7V302.1h-1.7zM1038.97 301.8h1.7V302.8h-1.7zM1047.29 265.4h1.7V266.4h-1.7zM1049.37 268.4h1.7V276.0h-1.7zM1051.45 275.7h1.7V276.7h-1.7zM1059.77 245.8h1.7V253.3h-1.7zM1066.01 246.0h1.7V249.0h-1.7zM1070.17 243.7h1.7V244.7h-1.7zM1074.33 241.9h1.7V242.9h-1.7zM1078.49 241.7h1.7V245.0h-1.7zM1080.57 246.7h1.7V251.8h-1.7zM1082.65 251.6h1.7V252.6h-1.7zM1101.37 137.5h1.7V148.7h-1.7zM1103.45 148.7h1.7V150.2h-1.7zM1107.61 127.8h1.7V135.4h-1.7zM1126.33 103.6h1.7V106.9h-1.7zM1128.41 106.9h1.7V111.2h-1.7zM1130.49 111.2h1.7V113.9h-1.7zM1132.57 113.9h1.7V115.4h-1.7zM1134.65 124.1h1.7V132.4h-1.7zM1136.73 135.8h1.7V153.0h-1.7zM1138.81 143.0h1.7V182.0h-1.7zM1140.89 170.0h1.7V222.0h-1.7zM1142.97 194.9h1.7V214.9h-1.7zM1147.13 194.2h1.7V201.4h-1.7zM1149.21 224.8h1.7V225.7h-1.7zM1151.29 230.8h1.7V234.0h-1.7zM1159.61 231.4h1.7V247.2h-1.7zM1165.85 229.9h1.7V232.0h-1.7zM1172.09 219.9h1.7V220.9h-1.7zM1176.25 193.3h1.7V208.7h-1.7zM1180.41 197.1h1.7V205.5h-1.7zM1182.49 218.1h1.7V221.1h-1.7zM1184.57 221.1h1.7V241.7h-1.7zM1188.73 221.1h1.7V232.5h-1.7zM1190.81 232.5h1.7V243.4h-1.7zM1194.97 230.4h1.7V233.4h-1.7zM1203.29 208.4h1.7V209.7h-1.7zM1205.37 211.0h1.7V223.7h-1.7zM1207.45 223.7h1.7V243.6h-1.7z" fill="#78f078"/></g>
<path d="M164.0 495.0 C165.7 493.2 170.7 487.7 174.0 484.5 C177.3 481.3 180.7 478.3 184.0 475.8 C187.3 473.2 190.7 471.1 194.0 469.0 C197.3 466.9 200.7 465.1 204.0 463.2 C207.3 461.4 210.7 459.5 214.0 457.8 C217.3 456.0 220.7 454.3 224.0 452.8 C227.3 451.2 230.7 449.8 234.0 448.2 C237.3 446.8 241.1 445.0 244.0 443.8 C246.9 442.5 249.0 442.1 251.5 440.8 C254.0 439.4 256.1 437.5 259.0 435.8 C261.9 434.0 265.7 431.9 269.0 430.0 C272.3 428.1 275.7 426.3 279.0 424.5 C282.3 422.7 285.7 420.8 289.0 419.0 C292.3 417.2 295.7 415.5 299.0 414.0 C302.3 412.5 305.7 411.6 309.0 410.0 C312.3 408.4 315.7 406.2 319.0 404.5 C322.3 402.8 325.7 401.1 329.0 399.5 C332.3 397.9 336.3 396.4 339.0 395.0 C341.7 393.6 342.5 392.4 345.0 391.2 C347.5 390.1 350.8 388.8 354.0 388.0 C357.2 387.2 360.7 387.0 364.0 386.2 C367.3 385.5 370.7 384.6 374.0 383.8 C377.3 382.9 380.7 382.0 384.0 381.2 C387.3 380.5 390.7 379.8 394.0 379.2 C397.3 378.7 401.1 378.1 404.0 378.0 C406.9 377.9 409.0 378.2 411.5 378.5 C414.0 378.8 416.1 379.5 419.0 380.0 C421.9 380.5 425.6 381.0 429.0 381.5 C432.4 382.0 436.1 382.3 439.5 382.8 C442.9 383.2 446.2 383.6 449.5 384.1 C452.8 384.6 456.2 385.2 459.5 385.8 C462.8 386.3 466.8 387.0 469.5 387.2 C472.2 387.5 474.2 387.0 476.0 387.5 C477.8 388.0 477.7 389.2 480.0 390.0 C482.3 390.8 486.7 391.6 490.0 392.5 C493.3 393.4 496.7 394.5 500.0 395.5 C503.3 396.5 506.7 397.5 510.0 398.8 C513.3 400.0 516.7 401.3 520.0 403.0 C523.3 404.7 526.7 406.9 530.0 408.8 C533.3 410.6 536.7 412.5 540.0 414.2 C543.3 416.0 546.7 417.7 550.0 419.5 C553.3 421.3 556.7 423.2 560.0 425.0 C563.3 426.8 566.7 428.2 570.0 430.0 C573.3 431.8 576.7 433.6 580.0 435.5 C583.3 437.4 586.7 439.5 590.0 441.2 C593.3 443.0 596.7 444.6 600.0 445.8 C603.3 446.9 606.7 447.4 610.0 448.2 C613.3 449.1 616.7 449.8 620.0 450.8 C623.3 451.8 626.7 452.9 630.0 454.2 C633.3 455.6 637.1 457.4 640.0 458.8 C642.9 460.1 645.2 461.5 647.5 462.5 C649.8 463.5 651.2 464.5 653.8 465.0 C656.2 465.5 659.8 465.3 662.5 465.5 C665.2 465.7 667.5 465.7 670.0 466.2 C672.5 466.8 675.0 468.1 677.5 468.8 C680.0 469.4 682.5 469.8 685.0 470.0 C687.5 470.2 690.0 470.3 692.5 470.0 C695.0 469.7 697.5 468.8 700.0 468.0 C702.5 467.2 705.0 466.1 707.5 465.0 C710.0 463.9 712.5 462.5 715.0 461.2 C717.5 460.0 720.0 458.8 722.5 457.5 C725.0 456.2 727.5 454.6 730.0 453.2 C732.5 451.9 735.2 450.6 737.5 449.5 C739.8 448.4 741.3 447.6 743.8 446.8 C746.2 445.9 749.0 445.4 752.0 444.5 C755.0 443.6 758.7 442.4 762.0 441.2 C765.3 440.1 768.7 438.6 772.0 437.5 C775.3 436.4 778.7 435.3 782.0 434.5 C785.3 433.7 788.7 433.2 792.0 432.5 C795.3 431.8 798.7 431.1 802.0 430.5 C805.3 429.9 808.7 429.5 812.0 428.8 C815.3 428.0 818.7 426.9 822.0 425.8 C825.3 424.6 828.7 423.6 832.0 422.0 C835.3 420.4 838.7 418.2 842.0 416.2 C845.3 414.2 848.7 412.1 852.0 410.0 C855.3 407.9 858.7 405.6 862.0 403.8 C865.3 401.9 868.8 400.2 872.0 398.8 C875.2 397.2 877.8 395.9 881.0 394.8 C884.2 393.6 887.7 393.1 891.0 392.0 C894.3 390.9 897.7 389.4 901.0 388.1 C904.3 386.9 907.7 385.7 911.0 384.5 C914.3 383.3 917.7 382.1 921.0 380.9 C924.3 379.6 927.7 378.4 931.0 377.1 C934.3 375.9 937.7 374.7 941.0 373.4 C944.3 372.0 947.7 370.6 951.0 369.1 C954.3 367.6 957.7 366.1 961.0 364.5 C964.3 362.9 967.7 361.1 971.0 359.5 C974.3 357.9 977.7 356.5 981.0 354.8 C984.3 353.0 987.7 351.0 991.0 349.1 C994.3 347.2 997.7 345.3 1001.0 343.4 C1004.3 341.4 1007.7 339.4 1011.0 337.5 C1014.3 335.6 1017.7 333.9 1021.0 332.0 C1024.3 330.1 1027.7 328.1 1031.0 326.2 C1034.3 324.4 1037.7 322.8 1041.0 320.9 C1044.3 318.9 1047.9 316.6 1051.0 314.6 C1054.1 312.6 1057.6 310.3 1059.8 308.8 C1061.9 307.2 1062.3 306.8 1064.0 305.5 C1065.7 304.2 1067.3 302.7 1070.0 301.2 C1072.7 299.8 1076.5 298.5 1080.0 297.0 C1083.5 295.5 1088.2 293.5 1091.0 292.2 C1093.8 291.0 1094.9 290.3 1096.5 289.5 C1098.1 288.7 1098.8 288.0 1100.8 287.2 C1102.7 286.5 1105.5 285.4 1108.2 284.8 C1111.0 284.1 1114.4 283.6 1117.0 283.1 C1119.6 282.6 1122.2 282.1 1124.0 281.8 C1125.8 281.4 1126.2 281.4 1127.5 281.2 C1128.8 281.1 1129.7 281.0 1131.5 280.8 C1133.3 280.5 1135.7 280.1 1138.2 280.0 C1140.8 279.9 1144.3 280.0 1147.0 280.2 C1149.7 280.5 1152.1 281.4 1154.5 281.5 C1156.9 281.6 1159.8 280.9 1161.5 280.8 C1163.2 280.6 1163.8 280.7 1165.0 280.5 C1166.2 280.3 1167.2 279.9 1169.0 279.5 C1170.8 279.1 1173.4 279.0 1175.8 278.4 C1178.1 277.8 1180.6 276.7 1183.2 276.0 C1185.9 275.3 1189.1 274.8 1191.8 274.4 C1194.4 273.9 1197.0 273.7 1199.0 273.2 C1201.0 272.8 1202.4 272.2 1204.0 271.8 C1205.6 271.3 1207.8 270.7 1208.5 270.5" stroke="#ffff00" stroke-width="2.1" fill="none" stroke-linejoin="round" stroke-linecap="round"/>
<path d="M164.0 360.5 C164.8 359.6 167.3 356.8 169.0 355.0 C170.7 353.2 172.3 351.2 174.0 349.5 C175.7 347.8 177.3 345.9 179.0 344.5 C180.7 343.1 182.3 342.1 184.0 341.2 C185.7 340.4 186.9 339.8 189.0 339.2 C191.1 338.7 194.0 338.4 196.5 338.0 C199.0 337.6 201.1 337.4 204.0 337.0 C206.9 336.6 210.7 336.1 214.0 335.8 C217.3 335.4 221.1 335.2 224.0 335.0 C226.9 334.8 229.0 334.7 231.5 334.2 C234.0 333.8 236.5 333.0 239.0 332.5 C241.5 332.0 244.0 331.7 246.5 331.2 C249.0 330.8 251.1 330.5 254.0 330.0 C256.9 329.5 261.1 328.4 264.0 328.2 C266.9 328.1 269.0 328.5 271.5 329.2 C274.0 330.0 276.5 331.4 279.0 332.5 C281.5 333.6 284.0 335.2 286.5 336.0 C289.0 336.8 291.7 336.2 294.0 337.0 C296.3 337.8 298.2 339.1 300.2 340.5 C302.3 341.9 304.2 343.7 306.5 345.5 C308.8 347.3 311.5 349.5 314.0 351.2 C316.5 353.0 319.0 354.2 321.5 355.8 C324.0 357.3 326.5 358.8 329.0 360.5 C331.5 362.2 334.4 364.9 336.5 366.2 C338.6 367.6 339.6 368.1 341.5 368.8 C343.4 369.4 345.7 369.3 347.8 370.0 C349.8 370.7 351.7 372.0 354.0 373.0 C356.3 374.0 359.0 375.4 361.5 376.2 C364.0 377.1 366.5 377.3 369.0 378.0 C371.5 378.7 374.0 379.5 376.5 380.5 C379.0 381.5 381.5 382.6 384.0 383.8 C386.5 384.9 389.1 386.2 391.5 387.5 C393.9 388.8 396.1 390.4 398.4 391.6 C400.7 392.9 403.1 393.1 405.2 395.0 C407.4 396.9 409.6 400.6 411.5 403.2 C413.4 405.9 414.8 408.2 416.5 410.8 C418.2 413.2 419.8 415.8 421.5 418.2 C423.2 420.8 424.6 423.2 426.5 425.8 C428.4 428.2 430.6 431.0 432.8 433.2 C434.9 435.5 437.4 437.4 439.5 439.5 C441.6 441.6 443.2 443.8 445.1 445.6 C447.0 447.5 448.6 449.4 450.8 450.6 C452.9 451.8 455.8 452.0 458.2 452.9 C460.8 453.7 463.4 454.6 465.8 455.6 C468.1 456.6 470.8 458.0 472.5 458.8 C474.2 459.5 474.8 459.4 476.0 460.0 C477.2 460.6 478.1 461.3 480.0 462.5 C481.9 463.7 485.4 465.7 487.5 467.0 C489.6 468.3 490.8 469.3 492.5 470.5 C494.2 471.7 495.5 472.7 497.5 474.2 C499.5 475.8 501.9 478.2 504.4 479.8 C506.9 481.3 509.9 482.1 512.5 483.4 C515.1 484.6 517.5 485.8 520.0 487.2 C522.5 488.7 525.0 490.6 527.5 492.0 C530.0 493.4 532.5 494.7 535.0 495.6 C537.5 496.5 540.0 496.8 542.5 497.5 C545.0 498.2 547.5 499.2 550.0 500.0 C552.5 500.8 555.0 501.9 557.5 502.5 C560.0 503.1 562.5 503.5 565.0 503.5 C567.5 503.5 570.0 503.1 572.5 502.8 C575.0 502.4 577.5 501.9 580.0 501.6 C582.5 501.4 585.0 501.1 587.5 501.2 C590.0 501.4 592.5 502.2 595.0 502.8 C597.5 503.2 600.0 503.8 602.5 504.2 C605.0 504.7 607.5 505.0 610.0 505.6 C612.5 506.3 615.0 507.3 617.5 508.1 C620.0 509.0 622.4 509.5 625.0 510.6 C627.6 511.8 630.5 513.6 633.2 515.2 C635.9 516.7 638.8 518.7 641.2 520.0 C643.7 521.3 646.0 522.1 648.1 522.8 C650.2 523.4 651.9 524.1 653.8 523.8 C655.6 523.4 657.3 522.1 659.4 520.6 C661.5 519.1 664.3 516.3 666.2 514.8 C668.2 513.2 669.6 512.9 671.2 511.2 C672.9 509.6 674.3 507.4 676.2 505.0 C678.2 502.6 680.8 500.0 683.1 497.1 C685.4 494.3 687.7 491.2 690.0 487.9 C692.3 484.5 694.4 481.9 696.9 476.9 C699.4 471.8 702.4 463.4 705.0 457.5 C707.6 451.6 710.0 446.5 712.5 441.2 C715.0 436.0 717.5 431.2 720.0 426.2 C722.5 421.2 725.0 416.0 727.5 411.2 C730.0 406.5 732.5 401.9 735.0 397.5 C737.5 393.1 740.7 387.9 742.5 385.0 C744.3 382.1 744.8 382.0 746.0 380.0 C747.2 378.0 748.5 375.2 750.0 373.0 C751.5 370.8 753.3 368.8 755.0 366.8 C756.7 364.7 758.3 362.6 760.0 360.5 C761.7 358.4 763.3 356.5 765.0 354.2 C766.7 352.0 768.3 349.2 770.0 346.8 C771.7 344.2 773.3 341.5 775.0 339.2 C776.7 337.0 778.3 335.1 780.0 333.0 C781.7 330.9 783.3 328.8 785.0 326.8 C786.7 324.7 788.3 322.6 790.0 320.5 C791.7 318.4 793.3 316.3 795.0 314.2 C796.7 312.2 798.4 310.1 800.0 308.0 C801.6 305.9 803.1 303.9 804.6 301.9 C806.2 299.9 807.6 297.4 809.4 296.1 C811.1 294.8 813.0 294.7 815.0 294.0 C817.0 293.3 819.6 292.2 821.2 291.8 C822.9 291.3 823.5 291.5 825.0 291.2 C826.5 291.0 828.2 290.8 830.0 290.0 C831.8 289.2 833.9 287.8 835.6 286.5 C837.4 285.2 839.0 283.6 840.6 282.5 C842.3 281.4 844.0 280.2 845.6 279.6 C847.3 279.0 849.0 278.6 850.6 278.8 C852.3 278.9 853.9 279.7 855.6 280.5 C857.4 281.3 859.7 282.7 861.2 283.4 C862.8 284.1 863.6 284.2 865.0 284.8 C866.4 285.3 867.7 285.8 869.4 286.5 C871.0 287.2 873.2 287.7 875.0 288.8 C876.8 289.8 878.3 291.1 880.0 292.6 C881.7 294.0 883.4 295.8 885.0 297.5 C886.6 299.2 888.2 301.1 889.8 302.9 C891.5 304.7 893.1 306.7 895.0 308.1 C896.9 309.6 899.6 311.0 901.2 311.8 C902.9 312.5 903.4 311.6 905.0 312.5 C906.6 313.4 908.9 316.2 911.0 317.2 C913.1 318.3 915.2 317.8 917.5 318.8 C919.8 319.7 922.5 321.6 925.0 323.0 C927.5 324.4 930.2 325.9 932.5 327.0 C934.8 328.1 936.7 329.1 938.8 329.5 C940.8 329.9 942.9 329.4 945.0 329.2 C947.1 329.1 949.2 329.2 951.2 328.8 C953.3 328.2 955.2 327.2 957.5 326.2 C959.8 325.3 962.5 324.0 965.0 323.0 C967.5 322.0 970.0 320.9 972.5 320.0 C975.0 319.1 977.5 318.3 980.0 317.5 C982.5 316.7 985.0 315.8 987.5 315.0 C990.0 314.2 992.9 313.1 995.0 313.0 C997.1 312.9 997.9 313.8 1000.0 314.5 C1002.1 315.2 1005.0 316.2 1007.5 317.0 C1010.0 317.8 1012.5 318.9 1015.0 319.5 C1017.5 320.1 1020.0 320.2 1022.5 320.8 C1025.0 321.2 1027.9 322.1 1030.0 322.5 C1032.1 322.9 1033.3 323.4 1035.0 323.2 C1036.7 323.1 1038.1 322.5 1040.0 321.8 C1041.9 321.0 1044.2 319.9 1046.2 318.8 C1048.3 317.6 1050.4 316.5 1052.5 315.0 C1054.6 313.5 1056.7 311.7 1058.8 310.0 C1060.8 308.3 1062.9 306.8 1065.0 305.0 C1067.1 303.2 1069.2 301.2 1071.2 299.5 C1073.3 297.8 1075.6 296.0 1077.5 294.5 C1079.4 293.0 1080.9 291.8 1082.4 290.4 C1083.9 289.0 1085.1 287.8 1086.5 286.2 C1087.9 284.7 1089.2 283.1 1090.8 281.2 C1092.3 279.4 1094.1 277.4 1095.8 275.4 C1097.4 273.4 1099.1 271.3 1100.8 269.1 C1102.4 267.0 1104.0 264.7 1105.8 262.5 C1107.5 260.3 1109.6 258.0 1111.4 255.9 C1113.1 253.8 1114.7 252.0 1116.4 249.8 C1118.1 247.5 1119.8 244.8 1121.5 242.5 C1123.2 240.2 1124.8 238.3 1126.5 236.2 C1128.2 234.2 1129.8 232.0 1131.5 230.0 C1133.2 228.0 1134.8 225.8 1136.5 224.5 C1138.2 223.2 1139.8 222.7 1141.5 222.0 C1143.2 221.3 1144.8 220.8 1146.5 220.5 C1148.2 220.2 1149.8 220.3 1151.5 220.0 C1153.2 219.7 1154.8 219.3 1156.5 218.8 C1158.2 218.2 1159.8 217.4 1161.5 216.8 C1163.2 216.1 1164.8 215.6 1166.5 215.0 C1168.2 214.4 1169.8 213.9 1171.5 213.2 C1173.2 212.6 1174.8 211.9 1176.5 211.2 C1178.2 210.6 1179.8 210.0 1181.5 209.5 C1183.2 209.0 1184.8 208.5 1186.5 208.0 C1188.2 207.5 1189.8 206.9 1191.5 206.2 C1193.2 205.6 1194.8 205.0 1196.5 204.2 C1198.2 203.5 1200.0 202.7 1201.5 202.0 C1203.0 201.3 1204.1 200.5 1205.2 200.0 C1206.4 199.5 1208.0 199.4 1208.5 199.2" stroke="#ff00ff" stroke-width="2.1" fill="none" stroke-linejoin="round" stroke-linecap="round"/>
<path d="M164.0 290.8 C164.8 291.2 167.1 293.1 169.0 293.8 C170.9 294.4 173.2 295.0 175.2 294.5 C177.3 294.0 179.6 290.6 181.5 290.8 C183.4 290.9 184.8 293.1 186.5 295.5 C188.2 297.9 189.8 301.5 191.5 305.0 C193.2 308.5 194.8 312.3 196.5 316.2 C198.2 320.2 199.8 324.4 201.5 328.8 C203.2 333.1 204.8 337.9 206.5 342.5 C208.2 347.1 209.8 351.7 211.5 356.2 C213.2 360.8 214.8 365.8 216.5 370.0 C218.2 374.2 220.0 378.1 221.5 381.2 C223.0 384.4 223.9 387.3 225.2 388.8 C226.6 390.2 228.0 389.8 229.5 390.0 C231.0 390.2 232.4 390.8 234.0 390.0 C235.6 389.2 237.3 386.3 239.0 385.5 C240.7 384.7 242.3 385.1 244.0 385.0 C245.7 384.9 247.8 385.8 249.0 385.0 C250.2 384.2 250.5 382.5 251.5 380.0 C252.5 377.5 253.8 374.2 255.2 370.0 C256.7 365.8 258.6 359.6 260.2 355.0 C261.9 350.4 263.6 346.0 265.2 342.5 C266.9 339.0 268.6 336.2 270.2 333.8 C271.9 331.3 273.6 329.5 275.2 328.0 C276.9 326.5 278.6 326.0 280.2 324.5 C281.9 323.0 283.8 320.8 285.2 318.8 C286.7 316.8 287.9 314.0 289.0 312.5 C290.1 311.0 291.0 309.6 292.0 309.5 C293.0 309.4 294.1 309.8 295.2 312.0 C296.4 314.2 297.8 318.5 299.0 322.5 C300.2 326.5 301.5 331.7 302.8 336.2 C304.0 340.8 305.0 345.8 306.5 350.0 C308.0 354.2 309.8 357.9 311.5 361.2 C313.2 364.6 314.8 367.3 316.5 370.0 C318.2 372.7 319.8 375.2 321.5 377.5 C323.2 379.8 324.9 381.5 326.5 383.8 C328.1 386.0 329.6 388.6 330.9 391.0 C332.1 393.4 332.9 396.8 334.0 398.2 C335.1 399.8 336.3 399.8 337.8 400.0 C339.2 400.2 341.1 399.6 342.8 399.5 C344.4 399.4 346.3 398.7 347.8 399.5 C349.2 400.3 350.0 402.2 351.5 404.5 C353.0 406.8 354.8 410.3 356.5 413.2 C358.2 416.2 359.8 419.3 361.5 422.0 C363.2 424.7 364.8 427.2 366.5 429.5 C368.2 431.8 369.8 434.3 371.5 435.8 C373.2 437.2 374.8 437.0 376.5 438.2 C378.2 439.5 379.8 441.6 381.5 443.2 C383.2 444.9 385.0 447.0 386.5 448.2 C388.0 449.5 388.8 450.5 390.2 450.8 C391.7 451.0 393.6 450.3 395.2 450.0 C396.9 449.7 398.6 448.7 400.2 449.0 C401.9 449.3 403.6 450.2 405.2 452.0 C406.9 453.8 408.6 456.6 410.2 459.5 C411.9 462.4 413.5 466.1 415.2 469.5 C417.0 472.9 419.1 476.7 420.8 479.8 C422.4 482.8 423.6 485.4 425.1 487.9 C426.6 490.3 428.3 493.0 429.8 494.5 C431.2 496.0 432.9 496.4 434.0 497.0 C435.1 497.6 435.3 497.4 436.2 498.0 C437.2 498.6 438.4 499.5 439.5 500.4 C440.6 501.2 441.8 502.4 443.0 503.2 C444.2 503.9 445.7 505.1 447.0 504.8 C448.3 504.6 449.7 502.8 450.8 501.6 C451.8 500.5 452.2 499.2 453.2 497.9 C454.3 496.6 455.9 495.1 456.9 493.8 C457.8 492.4 458.2 490.6 459.0 489.5 C459.8 488.4 461.0 487.9 461.9 486.9 C462.7 485.8 463.2 484.5 464.0 483.2 C464.8 482.0 466.0 480.6 466.9 479.4 C467.7 478.1 468.0 477.0 469.0 475.8 C470.0 474.5 471.3 472.8 472.6 471.9 C473.9 471.0 475.1 470.5 476.8 470.4 C478.4 470.3 480.9 470.9 482.5 471.2 C484.1 471.6 485.0 472.6 486.2 472.5 C487.5 472.4 488.6 469.7 490.0 470.5 C491.4 471.3 492.8 474.7 494.4 477.5 C495.9 480.3 497.5 484.0 499.4 487.5 C501.2 491.0 503.4 495.0 505.6 498.8 C507.8 502.5 510.5 506.7 512.5 510.0 C514.5 513.3 516.2 517.1 517.5 518.8 C518.8 520.4 519.0 518.8 520.0 520.0 C521.0 521.2 522.7 525.0 523.8 526.2 C524.8 527.5 525.1 526.4 526.2 527.5 C527.4 528.6 529.3 531.9 530.6 533.1 C532.0 534.4 533.2 535.3 534.4 535.0 C535.5 534.7 536.4 532.9 537.5 531.2 C538.6 529.6 540.0 526.7 541.2 525.0 C542.5 523.3 543.6 521.9 545.0 521.0 C546.4 520.1 547.7 520.0 549.4 519.6 C551.0 519.3 553.1 519.3 555.0 519.0 C556.9 518.7 558.9 518.4 560.6 517.8 C562.4 517.1 564.0 516.3 565.6 515.0 C567.3 513.7 569.0 511.5 570.6 509.8 C572.3 508.0 574.2 505.7 575.6 504.6 C577.1 503.6 578.1 502.9 579.4 503.4 C580.6 503.8 581.9 506.5 583.1 507.2 C584.4 508.0 585.7 508.4 586.9 508.1 C588.0 507.9 589.0 506.4 590.0 505.8 C591.0 505.1 591.8 504.3 593.1 504.4 C594.5 504.5 596.5 505.7 598.1 506.2 C599.8 506.8 601.5 507.8 603.1 507.8 C604.8 507.7 606.6 506.5 608.1 506.0 C609.7 505.5 611.4 504.5 612.5 505.0 C613.6 505.5 613.8 508.1 615.0 508.8 C616.2 509.4 618.8 508.4 620.0 509.0 C621.2 509.6 621.4 511.8 622.5 512.5 C623.6 513.2 625.6 512.7 626.9 513.5 C628.1 514.3 629.1 516.0 630.0 517.2 C630.9 518.5 631.0 520.0 632.2 521.2 C633.5 522.5 635.6 523.2 637.5 524.6 C639.4 526.1 642.0 528.0 643.8 530.0 C645.5 532.0 646.9 534.7 648.1 536.9 C649.4 539.0 650.3 541.0 651.2 542.9 C652.2 544.7 652.8 547.8 653.6 548.0 C654.5 548.2 655.6 545.4 656.2 544.2 C656.9 543.1 656.7 543.7 657.5 541.2 C658.3 538.8 660.0 533.4 661.2 529.4 C662.5 525.3 663.6 521.6 665.0 516.9 C666.4 512.2 668.1 505.9 669.4 501.2 C670.6 496.6 671.5 492.8 672.5 488.8 C673.5 484.7 674.4 482.5 675.6 476.9 C676.9 471.2 678.4 462.8 680.0 455.0 C681.6 447.2 683.3 439.2 685.0 430.0 C686.7 420.8 688.6 408.3 690.0 400.0 C691.4 391.7 692.3 386.2 693.4 380.0 C694.4 373.8 695.1 369.2 696.2 363.0 C697.4 356.8 698.8 349.7 700.0 343.0 C701.2 336.3 702.6 329.8 703.8 323.0 C704.9 316.2 705.7 308.8 706.9 302.5 C708.0 296.2 709.4 291.0 710.6 285.2 C711.9 279.5 713.1 273.6 714.4 267.8 C715.6 261.9 716.9 256.1 718.1 250.2 C719.3 244.4 720.5 237.8 721.7 232.5 C722.8 227.2 723.8 223.4 725.0 218.5 C726.2 213.6 727.5 207.7 728.8 203.1 C730.0 198.6 731.2 194.2 732.5 191.2 C733.8 188.3 735.0 186.5 736.2 185.2 C737.5 184.0 738.9 183.4 740.0 183.8 C741.1 184.1 742.0 185.5 743.0 187.2 C744.0 189.0 745.1 191.6 746.2 194.4 C747.4 197.1 748.7 200.1 750.0 203.8 C751.3 207.4 752.7 212.1 753.9 216.0 C755.2 219.9 756.6 224.6 757.5 227.2 C758.4 229.9 758.9 229.6 759.5 232.0 C760.1 234.4 760.3 237.8 761.2 241.5 C762.2 245.2 763.8 250.0 765.0 254.0 C766.2 258.0 767.5 261.6 768.8 265.2 C770.0 268.9 771.2 272.3 772.5 275.9 C773.8 279.4 775.0 283.0 776.2 286.5 C777.5 290.0 779.0 294.5 780.0 297.1 C781.0 299.7 781.7 300.2 782.5 302.0 C783.3 303.8 783.8 305.5 785.0 308.0 C786.2 310.5 788.3 314.0 790.0 316.8 C791.7 319.5 793.3 322.2 795.0 324.2 C796.7 326.3 798.3 327.4 800.0 329.2 C801.7 331.1 803.3 333.2 805.0 335.5 C806.7 337.8 808.3 340.5 810.0 343.0 C811.7 345.5 813.3 348.1 815.0 350.5 C816.7 352.9 818.3 355.6 820.0 357.5 C821.7 359.4 823.5 360.9 825.0 361.8 C826.5 362.6 827.5 362.7 828.8 362.5 C830.0 362.3 831.2 361.7 832.5 360.5 C833.8 359.3 835.0 357.8 836.2 355.5 C837.5 353.2 838.8 350.3 840.0 346.8 C841.2 343.2 842.5 339.0 843.8 334.2 C845.0 329.5 846.2 323.4 847.5 318.0 C848.8 312.6 850.0 306.6 851.2 301.9 C852.5 297.1 853.8 293.5 855.0 289.6 C856.2 285.7 857.5 282.0 858.8 278.4 C860.0 274.7 861.2 271.1 862.5 267.8 C863.8 264.4 865.0 261.2 866.2 258.4 C867.5 255.6 868.8 253.1 870.0 250.9 C871.2 248.6 872.5 246.4 873.8 245.0 C875.0 243.6 876.1 242.2 877.2 242.5 C878.4 242.8 879.4 244.8 880.4 246.5 C881.4 248.2 882.5 250.1 883.4 252.8 C884.2 255.4 884.8 259.4 885.6 262.5 C886.4 265.6 887.3 268.8 888.1 271.5 C889.0 274.2 889.8 276.4 890.6 279.0 C891.5 281.6 892.0 284.1 893.1 286.9 C894.2 289.6 895.8 292.8 897.1 295.6 C898.3 298.4 899.7 301.3 900.6 303.8 C901.5 306.2 901.6 307.0 902.5 310.0 C903.4 313.0 905.0 317.5 906.2 321.5 C907.5 325.5 909.0 330.8 910.0 334.0 C911.0 337.2 911.4 338.2 912.0 340.5 C912.6 342.8 912.8 344.5 913.8 347.5 C914.7 350.5 916.2 355.8 917.5 358.8 C918.8 361.7 919.8 363.2 921.2 365.0 C922.7 366.8 924.6 368.0 926.2 369.5 C927.9 371.0 929.6 372.4 931.2 373.8 C932.9 375.1 934.6 376.8 936.2 377.5 C937.9 378.2 939.6 378.2 941.2 378.0 C942.9 377.8 944.8 377.4 946.2 376.2 C947.7 375.1 948.8 373.1 950.0 371.2 C951.2 369.4 952.5 367.3 953.8 365.0 C955.0 362.7 956.2 360.0 957.5 357.5 C958.8 355.0 959.8 352.7 961.2 350.0 C962.7 347.3 964.6 344.4 966.2 341.2 C967.9 338.1 969.6 334.4 971.2 331.2 C972.9 328.1 974.6 325.2 976.2 322.5 C977.9 319.8 979.8 317.3 981.2 315.0 C982.7 312.7 983.8 311.2 985.0 308.8 C986.2 306.2 987.4 302.8 988.8 300.0 C990.1 297.2 991.4 294.5 993.0 292.2 C994.6 290.0 996.5 288.0 998.2 286.2 C1000.0 284.5 1001.6 283.1 1003.2 282.0 C1004.9 280.9 1006.6 280.4 1008.2 279.5 C1009.9 278.6 1011.6 277.9 1013.2 276.9 C1014.9 275.9 1016.8 274.4 1018.2 273.5 C1019.7 272.6 1020.8 271.6 1022.0 271.2 C1023.2 270.9 1024.5 270.9 1025.8 271.6 C1027.0 272.4 1028.2 274.2 1029.5 275.6 C1030.8 277.1 1032.0 278.9 1033.2 280.4 C1034.5 281.9 1035.8 283.6 1037.0 284.6 C1038.2 285.7 1039.3 286.2 1040.8 286.6 C1042.2 287.0 1044.1 287.1 1045.8 286.9 C1047.4 286.6 1049.1 286.1 1050.8 285.1 C1052.4 284.2 1054.1 282.5 1055.8 281.2 C1057.4 280.0 1059.1 279.0 1060.8 277.8 C1062.4 276.5 1064.1 275.5 1065.8 274.0 C1067.4 272.5 1069.1 270.4 1070.8 268.5 C1072.4 266.6 1074.1 264.2 1075.8 262.5 C1077.4 260.8 1079.1 259.6 1080.8 258.1 C1082.4 256.7 1084.1 255.6 1085.8 253.8 C1087.4 251.9 1089.0 250.4 1090.8 246.9 C1092.5 243.3 1094.7 237.1 1096.5 232.5 C1098.3 227.9 1099.8 223.6 1101.5 219.0 C1103.2 214.4 1104.8 209.5 1106.5 204.9 C1108.2 200.2 1109.8 195.7 1111.5 191.1 C1113.2 186.5 1114.8 182.3 1116.5 177.4 C1118.2 172.5 1119.9 166.6 1121.5 161.8 C1123.1 156.9 1124.5 152.2 1125.9 148.0 C1127.2 143.8 1128.5 139.7 1129.6 136.8 C1130.7 133.8 1131.6 132.0 1132.4 130.2 C1133.2 128.5 1133.7 126.9 1134.5 126.0 C1135.3 125.1 1136.2 124.5 1137.0 124.8 C1137.8 125.0 1138.6 126.1 1139.5 127.2 C1140.4 128.4 1141.3 130.4 1142.4 131.8 C1143.4 133.1 1144.7 133.2 1145.9 135.1 C1147.1 137.0 1148.4 139.9 1149.6 143.0 C1150.9 146.1 1152.1 150.0 1153.4 153.6 C1154.6 157.3 1155.9 161.1 1157.1 164.9 C1158.4 168.6 1159.6 172.4 1160.9 176.1 C1162.1 179.9 1163.4 183.8 1164.6 187.4 C1165.9 190.9 1167.1 194.2 1168.4 197.4 C1169.6 200.5 1170.9 203.7 1172.1 206.1 C1173.4 208.5 1174.6 209.9 1175.9 211.8 C1177.1 213.6 1178.3 215.4 1179.6 217.4 C1181.0 219.4 1182.6 222.0 1184.0 223.8 C1185.4 225.5 1186.5 227.0 1187.8 228.0 C1189.0 229.0 1190.2 229.4 1191.5 229.5 C1192.8 229.6 1194.0 229.3 1195.2 228.8 C1196.5 228.2 1197.8 227.2 1199.0 226.2 C1200.2 225.3 1201.5 224.0 1202.8 223.2 C1204.0 222.5 1205.5 221.9 1206.5 221.8 C1207.5 221.6 1208.2 222.4 1208.5 222.5" stroke="#00ffff" stroke-width="2.1" fill="none" stroke-linejoin="round" stroke-linecap="round"/>
<rect x="162" y="55" width="2.6" height="563.7" fill="#555"/>
<rect x="162" y="55" width="1052.0" height="1.5" fill="#7a7a7a"/>
<rect x="1213.0" y="56" width="1" height="562.7" fill="#a8a8a8"/>
<path d="M1214.0 74.80h2M1214.0 100.26h2M1214.0 125.71h2M1214.0 151.17h2M1214.0 176.63h2M1214.0 202.08h2M1214.0 227.54h2M1214.0 253.00h2M1214.0 278.46h2M1214.0 303.91h2M1214.0 329.37h2M1214.0 354.83h2M1214.0 380.28h2M1214.0 405.74h2M1214.0 431.20h2M1214.0 456.66h2M1214.0 482.11h2M1214.0 507.57h2M1214.0 533.03h2M1214.0 558.48h2M1214.0 583.94h2M1214.0 609.40h2" stroke="#a8a8a8" stroke-width="1"/>
<g font-family="Liberation Sans, sans-serif" font-size="6.6" fill="#e8e8e8">
<text x="1217.2" y="77.6">1.28330</text>
<text x="1217.2" y="103.1">1.28170</text>
<text x="1217.2" y="128.5">1.28010</text>
<text x="1217.2" y="154.0">1.27850</text>
<text x="1217.2" y="179.4">1.27690</text>
<text x="1217.2" y="204.9">1.27530</text>
<text x="1217.2" y="230.3">1.27370</text>
<text x="1217.2" y="255.8">1.27210</text>
<text x="1217.2" y="281.3">1.27050</text>
<text x="1217.2" y="306.7">1.26890</text>
<text x="1217.2" y="332.2">1.26730</text>
<text x="1217.2" y="357.6">1.26570</text>
<text x="1217.2" y="383.1">1.26410</text>
<text x="1217.2" y="408.5">1.26250</text>
<text x="1217.2" y="434.0">1.26090</text>
<text x="1217.2" y="459.5">1.25930</text>
<text x="1217.2" y="484.9">1.25770</text>
<text x="1217.2" y="510.4">1.25610</text>
<text x="1217.2" y="535.8">1.25450</text>
<text x="1217.2" y="561.3">1.25290</text>
<text x="1217.2" y="586.7">1.25130</text>
<text x="1217.2" y="612.2">1.24970</text>
</g>
<rect x="1214.5" y="237.8" width="29" height="7.4" fill="#fff"/>
<text x="1217.2" y="244.1" font-family="Liberation Sans, sans-serif" font-size="6.6" fill="#000">1.27284</text>
<path d="M166.6 60.6h4.2l-2.1 2.4z" fill="#fff"/>
<text x="174" y="64.8" font-family="Liberation Sans, sans-serif" font-size="6.4" fill="#f0f0f0" textLength="143" lengthAdjust="spacingAndGlyphs">GBPUSD#,H1&#160; 1.27476 1.27478 1.27240 1.27284</text>
</svg>
<svg width="1251" height="56" viewBox="0 0 1251 56" style="position:absolute;left:0;top:0">
<defs><linearGradient id="gb" x1="0" y1="0" x2="0" y2="1"><stop offset="0" stop-color="#8cc0f4"/><stop offset="1" stop-color="#4a8ee0"/></linearGradient></defs>
<rect x="6.1" y="7.2" width="8.3" height="5" rx="1.2" fill="#86aef0" stroke="#6a9bec" stroke-width="0.8"/>
<path d="M7 9.600h1.500M9.400 9.300h2.900" stroke="#f4f8ff" stroke-width="1"/>
<rect x="8.600" y="11.700" width="6.900" height="5.400" rx="1" fill="#f2f6ff" stroke="#5b8fe8" stroke-width="1.500"/>
<path d="M10 15.400l1.200-2 1.300 2.200 1.400-2.600" stroke="#a9c4f4" stroke-width="1" fill="none"/>
<rect x="1211.0" y="7.4" width="10.6" height="10.3" fill="#fff"/>
<rect x="1223.3" y="7.4" width="10.6" height="10.3" fill="#fff"/>
<rect x="1235.6" y="7.4" width="10.6" height="10.3" fill="#fff"/>
<path d="M1214.6 14.6h3" stroke="#555" stroke-width="1"/>
<path d="M1227.2 11.4h2.8v2.8h-2.8zM1228.4 11.2v-1h2.8v2.8h-1" stroke="#667" stroke-width="0.6" fill="none"/>
<path d="M1239.3 10.9l3 3.2M1242.3 10.9l-3 3.2" stroke="#333" stroke-width="0.9"/>
<circle cx="1217.3" cy="26.4" r="2.4" fill="#e8f0ff" stroke="#2f63c8" stroke-width="1.3"/><path d="M1215.6 28.3l-3.4 3.4" stroke="#2f63c8" stroke-width="1.6" stroke-linecap="round"/>
<ellipse cx="1233.4" cy="28.3" rx="4.2" ry="3.2" fill="#f4f4f4" stroke="#9a9a9a" stroke-width="0.8"/><path d="M1231 30.8l-1.3 2 2.6-1.3z" fill="#f4f4f4" stroke="#9a9a9a" stroke-width="0.6"/>
<ellipse cx="1238.8" cy="26.6" rx="4.2" ry="3.2" fill="#fafafa" stroke="#9a9a9a" stroke-width="0.8"/><path d="M1240.6 29.3l1.6 1.8-3-.9z" fill="#fafafa" stroke="#9a9a9a" stroke-width="0.6"/>
<rect x="9.4" y="23.4" width="8.2" height="7" rx="1" fill="#d6e6fa" stroke="#5b97e0" stroke-width="1.1"/>
<path d="M10.8 27.6l1.6-1.8" stroke="#7aa7e4" stroke-width="0.8"/>
<path d="M14.9 25.0h2.4v2.8h2.8v2.4h-2.8v2.8h-2.4v-2.8h-2.8v-2.4h2.8z" fill="#12cf12" stroke="#0a9a0a" stroke-width="0.5"/>
<path d="M23.4 27.7h3.4l-1.7 2.1z" fill="#111"/>
<rect x="33.6" y="23.4" width="8.8" height="6.6" rx="1" fill="#cfe0f7" stroke="#5b97e0" stroke-width="1.1"/>
<rect x="35.8" y="26.8" width="8.8" height="6.6" rx="1" fill="#e6effb" stroke="#5b97e0" stroke-width="1.1"/>
<rect x="33.6" y="23.4" width="8.8" height="6.6" rx="1" fill="#cfe0f7" fill-opacity="0.85" stroke="#5b97e0" stroke-width="1.1"/>
<path d="M35.2 28.4h5.6M37.4 31.6h5.4" stroke="#8db4e8" stroke-width="0.9"/>
<path d="M47.6 27.7h3.4l-1.7 2.1z" fill="#111"/>
<path d="M56.4 21.0V35.0" stroke="#c4c4c4" stroke-width="1"/>
<path d="M57.6 21.0V35.0" stroke="#fbfbfb" stroke-width="1"/>
<rect x="60.0" y="20.2" width="15.2" height="15.8" fill="#f9f9f9"/>
<path d="M60.0 36.0V20.2H75.2" stroke="#d4d4d4" stroke-width="0.8" fill="none"/>
<rect x="61.8" y="23.6" width="10" height="9.8" rx="1" fill="#fdfdff" stroke="#8db9ec" stroke-width="1.2"/>
<path d="M65.1 24.8l2.2 2.2-2.2 2.2-2.2-2.2z" fill="#1fb83a"/><path d="M67.9 27.9l2.2 2.2-2.2 2.2-2.2-2.2z" fill="#f2672e"/>
<circle cx="85" cy="28.7" r="3.3" fill="none" stroke="#555" stroke-width="0.8"/>
<path d="M85 23.6v3M85 33.8v-3M79.9 28.7h3M90.1 28.7h-3" stroke="#555" stroke-width="0.8"/>
<path d="M83.900 25l1.100 1.400 1.100-1.400zM83.900 32.400l1.100-1.400 1.100 1.400zM81.300 27.600l1.400 1.100-1.400 1.100zM88.700 27.600l-1.400 1.100 1.400 1.100z" fill="#4a4a4a"/>
<path d="M96.2 24.2h3.2l0.8 1h4.2v4.6h-8.2z" fill="#f4dc6a" stroke="#d9b738" stroke-width="0.6"/>
<path d="M99.3 29.8v4" stroke="#999" stroke-width="0.8"/>
<path d="M104.5 26.9l1.05 2.3 2.5.3-1.85 1.7.5 2.5-2.2-1.25-2.2 1.25.5-2.5-1.85-1.7 2.5-.3z" fill="#f2c61c" stroke="#c99a10" stroke-width="0.6"/>
<rect x="114.6" y="23.6" width="10.4" height="9.2" rx="1.4" fill="url(#gb)" stroke="#5a9ae6" stroke-width="0.8"/>
<rect x="115" y="24.600" width="2.200" height="7.600" fill="#2f7bd6"/>
<rect x="117.300" y="25.200" width="6.600" height="6.400" fill="#f4f6ff"/>
<path d="M118 25.6v5.4" stroke="#e88" stroke-width="0.7" stroke-dasharray="1 2.4"/>
<rect x="132.4" y="23.3" width="8.2" height="9.2" fill="#f3efe4" stroke="#c9c0a8" stroke-width="0.7"/>
<path d="M143.4 34l-3.6-3.4" stroke="#d9a520" stroke-width="1.7" stroke-linecap="round"/>
<circle cx="137.6" cy="28.4" r="3.2" fill="#c9e4f7" stroke="#5d9bd3" stroke-width="1.1"/>
<path d="M136.2 24.2l1 1.2 1.2-1.4M137.5 27v2.4" stroke="#4a80b8" stroke-width="0.7" fill="none"/>
<path d="M147.8 21.0V35.0" stroke="#c4c4c4" stroke-width="1"/>
<path d="M149.0 21.0V35.0" stroke="#fbfbfb" stroke-width="1"/>
<path d="M153.6 23.6h5.2l2.6 2.4v6.4h-7.8z" fill="#fafafa" stroke="#9a9a9a" stroke-width="0.7"/><path d="M158.8 23.6v2.4h2.6" stroke="#9a9a9a" stroke-width="0.6" fill="none"/>
<path d="M155 27.5h2.2M155 29.3h1.4" stroke="#bbb" stroke-width="0.7"/>
<path d="M159.0 27.3h2.3v2.6h2.6v2.3h-2.6v2.6h-2.3v-2.6h-2.6v-2.3h2.6z" fill="#12cf12" stroke="#0a9a0a" stroke-width="0.5"/>
<path d="M203.8 29.6l5.2-5.6 5.6 3.6-4.6 6z" fill="#dfa41a" stroke="#b07c0c" stroke-width="0.6"/>
<path d="M205.3 29.3l4-4.2 4 2.6-3.6 4.3z" fill="#f0c540"/>
<path d="M203.8 29.6l6.200 4 0-1.100-5.6-3.6z" fill="#a67408"/>
<rect x="222.9" y="23.2" width="6.8" height="6" rx="1" fill="#1e9cff"/>
<path d="M224.4 25.2l1.4 1-1.4 1M226.6 26.2h1.6" stroke="#cfeaff" stroke-width="0.7" fill="none"/>
<path d="M222.4 33.2a1.900 1.900 0 0 1 0.300-3.800a2.600 2.600 0 0 1 4.600-0.700a2.200 2.200 0 0 1 3.600 1.200a1.700 1.700 0 0 1-0.200 3.300z" fill="#e3eafa" stroke="#8fa5d6" stroke-width="0.8"/>
<circle cx="244.5" cy="28.3" r="5.2" fill="#c9ced8" stroke="#aab0bd" stroke-width="0.5"/>
<path d="M244.5 28.3l5.100 1.100a5.200 5.200 0 0 1-4.600 4.100z" fill="#3c9f45"/>
<path d="M241.100 25.300a4.300 4.300 0 0 0 0 6M242.700 26.500a2.500 2.500 0 0 0 0 3.600" stroke="#5a7fd0" stroke-width="0.8" fill="none"/>
<circle cx="244.5" cy="28.300" r="1.100" fill="#2a62d6"/>
<rect x="254.4" y="20.2" width="48.6" height="15.8" fill="#f9f9f9"/>
<path d="M254.4 36.0V20.2H303.0" stroke="#d4d4d4" stroke-width="0.8" fill="none"/>
<path d="M257.400 27.200h8.400l-1 4.800-3 1.400-3.400-1.600z" fill="#edcb2c" stroke="#c9a516" stroke-width="0.5"/>
<path d="M256.400 26.600c0.600-2.600 2.800-3.600 5.300-3.500c2.600 0 4.900 1 5.500 3.400c-1.800 1.100-9 1.200-10.800 0.100z" fill="#3c9fe0" stroke="#2a7fc0" stroke-width="0.5"/>
<path d="M258.800 25.200c1.400-1 4.200-1 5.800-0.100" stroke="#9fd3f5" stroke-width="0.8" fill="none"/>
<circle cx="264.600" cy="30.800" r="2.900" fill="#1fb52a" stroke="#fff" stroke-width="0.5"/><path d="M263.700 29.300l2.500 1.500-2.500 1.500z" fill="#fff"/>
<path d="M304.4 21.0V35.0" stroke="#c4c4c4" stroke-width="1"/>
<path d="M305.6 21.0V35.0" stroke="#fbfbfb" stroke-width="1"/>
<path d="M307.2 21.5V34.5" stroke="#b8b8b8" stroke-width="1" stroke-dasharray="1 1"/>
<path d="M315.0 24.600V33.200M313.4 32.100H322.4" stroke="#4a4a4a" stroke-width="1" fill="none"/>
<path d="M314.1 25.500l0.900-1.300 0.900 1.300zM321.5 31.200l1.300 0.900-1.300 0.900z" fill="#4a4a4a"/>
<path d="M319.400 25.400V30.800M319.400 26.600h1.300M318.100 29.600h1.300" stroke="#22a83a" stroke-width="1.100"/>
<rect x="327.8" y="20.2" width="16.0" height="15.8" fill="#f9f9f9"/>
<path d="M327.8 36.0V20.2H343.8" stroke="#d4d4d4" stroke-width="0.8" fill="none"/>
<path d="M332.6 24.600V33.200M331.0 32.100H340.0" stroke="#4a4a4a" stroke-width="1" fill="none"/>
<path d="M331.7 25.500l0.900-1.300 0.900 1.300zM339.1 31.200l1.300 0.900-1.300 0.900z" fill="#4a4a4a"/>
<path d="M336.750 23.100V31.100" stroke="#1a9a2a" stroke-width="0.9"/><rect x="334.900" y="24.300" width="3.700" height="5.500" rx="1" fill="#22c83a" stroke="#14992a" stroke-width="0.6"/>
<path d="M350.5 24.600V33.200M348.9 32.100H357.9" stroke="#4a4a4a" stroke-width="1" fill="none"/>
<path d="M349.6 25.500l0.900-1.300 0.900 1.300zM357.0 31.200l1.300 0.900-1.300 0.900z" fill="#4a4a4a"/>
<path d="M349.600 29.900c1.800-1 3-2.600 4.100-3.600c1.200 0.800 2.200 1.800 3.300 3" stroke="#2f9f3f" stroke-width="1" fill="none"/>
<path d="M363.3 21.0V35.0" stroke="#c4c4c4" stroke-width="1"/>
<path d="M364.5 21.0V35.0" stroke="#fbfbfb" stroke-width="1"/>
<path d="M375.2 30.1l3.700 3.500" stroke="#e2b431" stroke-width="1.900" stroke-linecap="round"/>
<circle cx="372.3" cy="27.2" r="3.700" fill="#d9ebfb" stroke="#4f8fdc" stroke-width="1.300"/>
<path d="M370.5 27.2h3.600M372.3 25.4v3.600" stroke="#3f86c8" stroke-width="1.100"/>
<path d="M392.6 29.9l3.700 3.500" stroke="#e2b431" stroke-width="1.900" stroke-linecap="round"/>
<circle cx="389.7" cy="27.0" r="3.700" fill="#d9ebfb" stroke="#4f8fdc" stroke-width="1.300"/>
<path d="M387.9 27.0h3.600" stroke="#3f86c8" stroke-width="1.100"/>
<rect x="403.3" y="23.2" width="5.300" height="5.100" rx="0.700" fill="#4fae2f"/>
<rect x="404.3" y="25.5" width="3.300" height="1.500" fill="#eef4ff"/>
<rect x="408.9" y="23.2" width="5.300" height="5.100" rx="0.700" fill="#2f6fdb"/>
<rect x="409.9" y="25.5" width="3.300" height="1.500" fill="#eef4ff"/>
<rect x="403.3" y="28.6" width="5.300" height="5.100" rx="0.700" fill="#2f6fdb"/>
<rect x="404.3" y="30.9" width="3.300" height="1.500" fill="#eef4ff"/>
<rect x="408.9" y="28.6" width="5.300" height="5.100" rx="0.700" fill="#4fae2f"/>
<rect x="409.9" y="30.9" width="3.300" height="1.500" fill="#eef4ff"/>
<path d="M418.9 21.0V35.0" stroke="#c4c4c4" stroke-width="1"/>
<path d="M420.1 21.0V35.0" stroke="#fbfbfb" stroke-width="1"/>
<rect x="421.7" y="20.2" width="16.0" height="15.8" fill="#f9f9f9"/>
<path d="M421.7 36.0V20.2H437.7" stroke="#d4d4d4" stroke-width="0.8" fill="none"/>
<path d="M427.2 24.600V33.200M425.6 32.100H434.6" stroke="#4a4a4a" stroke-width="1" fill="none"/>
<path d="M426.3 25.500l0.900-1.300 0.900 1.300zM433.7 31.200l1.300 0.900-1.300 0.900z" fill="#4a4a4a"/>
<path d="M430 25.600l3 2.300-3 2.300z" fill="#2fb84a"/>
<path d="M444.7 24.600V33.200M443.1 32.100H452.1" stroke="#4a4a4a" stroke-width="1" fill="none"/>
<path d="M443.8 25.500l0.900-1.300 0.900 1.300zM451.2 31.200l1.300 0.900-1.300 0.900z" fill="#4a4a4a"/>
<path d="M448.600 24V30.900" stroke="#3a8fd0" stroke-width="0.9"/><path d="M449.300 28l3.100-1.900v3.800z" fill="#e2572a"/>
<path d="M457.6 21.0V35.0" stroke="#c4c4c4" stroke-width="1"/>
<path d="M458.8 21.0V35.0" stroke="#fbfbfb" stroke-width="1"/>
<path d="M463.400 23.400h4.600l2.400 2.200v6h-7z" fill="#f7f7f7" stroke="#8f8f8f" stroke-width="0.7"/><path d="M464.600 25.500v4.600" stroke="#555" stroke-width="0.7"/><path d="M468 23.400v2.200h2.400" stroke="#8f8f8f" stroke-width="0.600" fill="none"/>
<path d="M468.5 26.9h2.3v2.6h2.6v2.3h-2.6v2.6h-2.3v-2.6h-2.6v-2.3h2.6z" fill="#12cf12" stroke="#0a9a0a" stroke-width="0.5"/>
<path d="M476.2 27.7h3.4l-1.7 2.1z" fill="#111"/>
<circle cx="492.100" cy="28.400" r="4.700" fill="#f2f6fb" stroke="#1f5fc0" stroke-width="1.700"/><path d="M492.100 25.600v2.900l2.100 1.100" stroke="#556" stroke-width="0.800" fill="none"/>
<path d="M500.5 27.7h3.4l-1.7 2.1z" fill="#111"/>
<rect x="511.300" y="23.600" width="10.700" height="9.200" rx="1" fill="#eef3fb" stroke="#5b97e0" stroke-width="1.200"/>
<path d="M512.600 27.600c2-0.300 2.800-1.500 4.200-1.400c1.400 0.100 2.300-1 4-1.200" stroke="#d0602a" stroke-width="0.800" fill="none"/><path d="M512.600 30.900c2-0.800 2.800 0.300 4.200-0.300c1.400-0.600 2.300-0.300 4-1" stroke="#3a9a4a" stroke-width="0.800" fill="none"/>
<path d="M524.6 27.7h3.4l-1.7 2.1z" fill="#111"/>
<path d="M532.800 20.500V35.500" stroke="#dcdcdc" stroke-width="1"/>
<rect x="7.4" y="38.2" width="15.8" height="15.2" fill="#f9f9f9"/>
<path d="M7.4 53.4V38.2H23.2" stroke="#d4d4d4" stroke-width="0.8" fill="none"/>
<path d="M12.300 41.500v8l1.900-1.800 1.500 3.300 1.300-0.600-1.500-3.200h2.500z" fill="#3c3c3c"/>
<path d="M28 46.400h9.900M33.100 41.700v9.500" stroke="#8a8a8a" stroke-width="1.100"/><rect x="32.300" y="45.600" width="1.600" height="1.600" fill="#f0f0f0"/>
<path d="M43.0 39.0V53.0" stroke="#c4c4c4" stroke-width="1"/>
<path d="M44.2 39.0V53.0" stroke="#fbfbfb" stroke-width="1"/>
<path d="M53.700 42V50.700" stroke="#858585" stroke-width="1.400"/>
<path d="M67.900 46.400H75.700" stroke="#858585" stroke-width="1.300"/>
<path d="M85.300 50.600L93.600 42.600" stroke="#6a6a6a" stroke-width="1.200"/>
<path d="M101.800 47l7-5.600M102.600 49.200l7-5.600M103.400 51.400l7-5.600" stroke="#777" stroke-width="0.900"/><path d="M104.600 43.600l2 5.800M107.400 42.200l2 5.800" stroke="#888" stroke-width="0.700"/>
<text x="108.800" y="52" font-family="Liberation Sans, sans-serif" font-size="5" font-weight="bold" fill="#444">E</text>
<path d="M119.800 41.700h8.900M119.800 43.600h8.900M119.800 49.300h6" stroke="#b4b4b4" stroke-width="0.900"/><path d="M119.800 46.500h8.900" stroke="#8a8a8a" stroke-width="0.900"/>
<text x="126.300" y="51.900" font-family="Liberation Sans, sans-serif" font-size="5" font-weight="bold" font-style="italic" fill="#555">F</text>
<text x="139" y="49.400" font-family="Liberation Sans, sans-serif" font-size="8.400" font-weight="bold" fill="#585858">A</text>
<rect x="156.200" y="42.300" width="7.300" height="8.200" fill="#fbfbfb" stroke="#b9b9b9" stroke-width="0.700"/><path d="M154.900 41.900h2.400" stroke="#777" stroke-width="0.800" stroke-dasharray="0.800 0.800"/>
<text x="157.300" y="49.600" font-family="Liberation Serif, serif" font-size="7.600" font-weight="bold" fill="#444">T</text>
<path d="M173.400 44.600l2.200-2.300 2.200 2.300-2.200 1.200zM177.300 48.200l2.200-1.200 2.200 1.200-2.200 2.300z" fill="#444"/><path d="M175 46.800l4.200 0.600" stroke="#666" stroke-width="0.900"/>
<path d="M185.2 45.3h3.4l-1.7 2.1z" fill="#111"/>
<path d="M193.0 39.0V53.0" stroke="#c4c4c4" stroke-width="1"/>
<path d="M194.2 39.0V53.0" stroke="#fbfbfb" stroke-width="1"/>
<path d="M195.7 39.5V52.5" stroke="#b8b8b8" stroke-width="1" stroke-dasharray="1 1"/>
<rect x="268.4" y="38.2" width="16.6" height="15.2" fill="#f9f9f9"/>
<path d="M268.4 53.4V38.2H285.0" stroke="#d4d4d4" stroke-width="0.8" fill="none"/>
<path d="M356.500 38V54" stroke="#d2d2d2" stroke-width="1"/>
</svg>
<span id="m1" class="tx" style="left:21.10px;top:8.77px;font-size:8.30px;color:#1a1a1a;transform:scaleX(0.6809);">ファイル <span style="font-size:1.06em">(F)</span></span>
<span id="m2" class="tx" style="left:64.60px;top:8.77px;font-size:8.30px;color:#1a1a1a;transform:scaleX(0.8645);">表示 <span style="font-size:1.06em">(V)</span></span>
<span id="m3" class="tx" style="left:103.30px;top:8.77px;font-size:8.30px;color:#1a1a1a;transform:scaleX(0.8560);">挿入<span style="font-size:1.06em">(I)</span></span>
<span id="m4" class="tx" style="left:136.40px;top:8.77px;font-size:8.30px;color:#1a1a1a;transform:scaleX(0.6833);">チャート <span style="font-size:1.06em">(C)</span></span>
<span id="m5" class="tx" style="left:180.40px;top:8.77px;font-size:8.30px;color:#1a1a1a;transform:scaleX(0.7447);">ツール <span style="font-size:1.06em">(T)</span></span>
<span id="m6" class="tx" style="left:219.50px;top:8.77px;font-size:8.30px;color:#1a1a1a;transform:scaleX(0.7172);">ウィンドウ <span style="font-size:1.06em">(W)</span></span>
<span id="m7" class="tx" style="left:272.80px;top:8.77px;font-size:8.30px;color:#1a1a1a;transform:scaleX(0.7872);">ヘルプ <span style="font-size:1.06em">(H)</span></span>
<span id="t1" class="tx" style="left:166.60px;top:24.73px;font-size:8.00px;color:#1a1a1a;transform:scaleX(0.9531);">新規注文</span>
<span id="t2" class="tx" style="left:270.60px;top:24.73px;font-size:8.00px;color:#1a1a1a;transform:scaleX(0.9406);">自動売買</span>
<span id="tf0" class="tx" style="left:202.00px;top:44.34px;font-size:6.80px;color:#3a3a3a;transform:scaleX(0.8889);">M1</span>
<span id="tf1" class="tx" style="left:219.00px;top:44.34px;font-size:6.80px;color:#3a3a3a;transform:scaleX(1.0000);">M5</span>
<span id="tf2" class="tx" style="left:235.60px;top:44.34px;font-size:6.80px;color:#3a3a3a;transform:scaleX(0.8769);">M15</span>
<span id="tf3" class="tx" style="left:253.00px;top:44.34px;font-size:6.80px;color:#3a3a3a;transform:scaleX(0.9000);">M30</span>
<span id="tf4" class="tx" style="left:273.00px;top:44.34px;font-size:6.80px;color:#3a3a3a;transform:scaleX(0.8556);">H1</span>
<span id="tf5" class="tx" style="left:289.60px;top:44.34px;font-size:6.80px;color:#3a3a3a;transform:scaleX(0.9333);">H4</span>
<span id="tf6" class="tx" style="left:307.90px;top:44.34px;font-size:6.80px;color:#3a3a3a;transform:scaleX(0.9000);">D1</span>
<span id="tf7" class="tx" style="left:325.40px;top:44.34px;font-size:6.80px;color:#3a3a3a;transform:scaleX(0.9300);">W1</span>
<span id="tf8" class="tx" style="left:342.00px;top:44.34px;font-size:6.80px;color:#3a3a3a;transform:scaleX(0.9364);">MN</span>
<span id="mwh" class="tx" style="left:7.30px;top:57.24px;font-size:7.40px;color:#1a1a1a;transform:scaleX(1.0229);">気配値表示: 23:57:59</span>
<span id="c0" class="tx" style="left:9.50px;top:69.71px;font-size:7.20px;color:#222;transform:scaleX(0.9483);">通貨ペア</span>
<span id="c1" class="tx" style="left:87.70px;top:70.16px;font-size:8.20px;color:#222;transform:scaleX(0.9167);">Bid</span>
<span id="c2" class="tx" style="left:124.70px;top:70.16px;font-size:8.20px;color:#222;transform:scaleX(0.8929);">Ask</span>
<span id="c3" class="tx" style="left:154.20px;top:70.16px;font-size:8.20px;color:#222;transform:scaleX(0.6000);">!</span>
<span id="s0" class="tx" style="left:19.00px;top:82.07px;font-size:8.90px;color:#1a1a1a;transform:scaleX(0.8405);">GBPAUD#</span>
<span id="b0" class="tx" style="left:72.00px;top:82.07px;font-size:8.90px;color:#3a3aff;transform:scaleX(0.8406);">1.86874</span>
<span id="a0" class="tx" style="left:110.30px;top:82.07px;font-size:8.90px;color:#3a3aff;transform:scaleX(0.8406);">1.86953</span>
<span id="p0" class="tx" style="left:147.90px;top:82.07px;font-size:8.90px;color:#3a3aff;transform:scaleX(0.8400);">79</span>
<span id="s1" class="tx" style="left:19.00px;top:95.10px;font-size:8.90px;color:#1a1a1a;transform:scaleX(0.8333);">EURAUD#</span>
<span id="b1" class="tx" style="left:72.00px;top:95.10px;font-size:8.90px;color:#ff2222;transform:scaleX(0.8406);">1.62004</span>
<span id="a1" class="tx" style="left:110.30px;top:95.10px;font-size:8.90px;color:#ff2222;transform:scaleX(0.8406);">1.62061</span>
<span id="p1" class="tx" style="left:147.90px;top:95.10px;font-size:8.90px;color:#ff2222;transform:scaleX(0.8400);">57</span>
<span id="s2" class="tx" style="left:19.00px;top:108.13px;font-size:8.90px;color:#ffffff;transform:scaleX(0.8214);">GBPUSD#</span>
<span id="b2" class="tx" style="left:72.00px;top:108.13px;font-size:8.90px;color:#ffffff;transform:scaleX(0.8406);">1.27284</span>
<span id="a2" class="tx" style="left:110.30px;top:108.13px;font-size:8.90px;color:#ffffff;transform:scaleX(0.8406);">1.27341</span>
<span id="p2" class="tx" style="left:147.90px;top:108.13px;font-size:8.90px;color:#ffffff;transform:scaleX(0.8400);">57</span>
<span id="s3" class="tx" style="left:19.00px;top:121.16px;font-size:8.90px;color:#1a1a1a;transform:scaleX(0.8143);">EURUSD#</span>
<span id="b3" class="tx" style="left:72.00px;top:121.16px;font-size:8.90px;color:#ff2222;transform:scaleX(0.8406);">1.10343</span>
<span id="a3" class="tx" style="left:110.30px;top:121.16px;font-size:8.90px;color:#ff2222;transform:scaleX(0.8406);">1.10410</span>
<span id="p3" class="tx" style="left:147.90px;top:121.16px;font-size:8.90px;color:#ff2222;transform:scaleX(0.8400);">67</span>
<span id="s4" class="tx" style="left:19.00px;top:134.19px;font-size:8.90px;color:#1a1a1a;transform:scaleX(0.8571);">AUDUSD#</span>
<span id="b4" class="tx" style="left:72.00px;top:134.19px;font-size:8.90px;color:#ff2222;transform:scaleX(0.8406);">0.68084</span>
<span id="a4" class="tx" style="left:110.30px;top:134.19px;font-size:8.90px;color:#ff2222;transform:scaleX(0.8406);">0.68163</span>
<span id="p4" class="tx" style="left:147.90px;top:134.19px;font-size:8.90px;color:#ff2222;transform:scaleX(0.8400);">79</span>
<span id="s5" class="tx" style="left:19.00px;top:147.22px;font-size:8.90px;color:#1a1a1a;transform:scaleX(0.7825);">GBPJPY#</span>
<span id="b5" class="tx" style="left:72.00px;top:147.22px;font-size:8.90px;color:#ff2222;transform:scaleX(0.8406);">179.453</span>
<span id="a5" class="tx" style="left:110.30px;top:147.22px;font-size:8.90px;color:#ff2222;transform:scaleX(0.8406);">179.647</span>
<span id="p5" class="tx" style="left:143.70px;top:147.22px;font-size:8.90px;color:#ff2222;transform:scaleX(0.8400);">194</span>
<span id="s6" class="tx" style="left:19.00px;top:160.25px;font-size:8.90px;color:#1a1a1a;transform:scaleX(0.7750);">EURJPY#</span>
<span id="b6" class="tx" style="left:72.00px;top:160.25px;font-size:8.90px;color:#ff2222;transform:scaleX(0.8406);">155.607</span>
<span id="a6" class="tx" style="left:110.30px;top:160.25px;font-size:8.90px;color:#ff2222;transform:scaleX(0.8406);">155.793</span>
<span id="p6" class="tx" style="left:143.70px;top:160.25px;font-size:8.90px;color:#ff2222;transform:scaleX(0.8400);">186</span>
<span id="s7" class="tx" style="left:19.00px;top:173.28px;font-size:8.90px;color:#1a1a1a;transform:scaleX(0.8000);">USDJPY#</span>
<span id="b7" class="tx" style="left:72.00px;top:173.28px;font-size:8.90px;color:#ff2222;transform:scaleX(0.8406);">140.998</span>
<span id="a7" class="tx" style="left:110.30px;top:173.28px;font-size:8.90px;color:#ff2222;transform:scaleX(0.8406);">141.103</span>
<span id="p7" class="tx" style="left:143.70px;top:173.28px;font-size:8.90px;color:#ff2222;transform:scaleX(0.8400);">105</span>
<span id="s8" class="tx" style="left:19.00px;top:186.31px;font-size:8.90px;color:#1a1a1a;transform:scaleX(0.8200);">AUDJPY#</span>
<span id="b8" class="tx" style="left:76.20px;top:186.31px;font-size:8.90px;color:#ff2222;transform:scaleX(0.8407);">96.073</span>
<span id="a8" class="tx" style="left:114.50px;top:186.31px;font-size:8.90px;color:#ff2222;transform:scaleX(0.8407);">96.113</span>
<span id="p8" class="tx" style="left:147.90px;top:186.31px;font-size:8.90px;color:#ff2222;transform:scaleX(0.8400);">40</span>
<span id="s9" class="tx" style="left:19.00px;top:199.34px;font-size:8.90px;color:#1a1a1a;transform:scaleX(0.8400);">GOLD#</span>
<span id="b9" class="tx" style="left:72.00px;top:199.34px;font-size:8.90px;color:#ff2222;transform:scaleX(0.8406);">2062.79</span>
<span id="a9" class="tx" style="left:110.30px;top:199.34px;font-size:8.90px;color:#ff2222;transform:scaleX(0.8406);">2063.03</span>
<span id="p9" class="tx" style="left:147.90px;top:199.34px;font-size:8.90px;color:#ff2222;transform:scaleX(0.8400);">24</span>
<span id="s10" class="tx" style="left:19.00px;top:212.37px;font-size:8.90px;color:#1a1a1a;transform:scaleX(0.7972);">SILVER#</span>
<span id="b10" class="tx" style="left:76.20px;top:212.37px;font-size:8.90px;color:#ff2222;transform:scaleX(0.8407);">23.778</span>
<span id="a10" class="tx" style="left:114.50px;top:212.37px;font-size:8.90px;color:#ff2222;transform:scaleX(0.8407);">23.811</span>
<span id="p10" class="tx" style="left:147.90px;top:212.37px;font-size:8.90px;color:#ff2222;transform:scaleX(0.8400);">33</span>
<span class="tx" style="left:1216.6px;top:626.2px;font-size:10.8px;color:#31a9c8;transform:scaleX(1.34);-webkit-text-stroke:0.3px #31a9c8;"><span style="font-size:9.6px">1</span><span style="position:relative;top:1.8px;">9</span></span>
</body></html>
